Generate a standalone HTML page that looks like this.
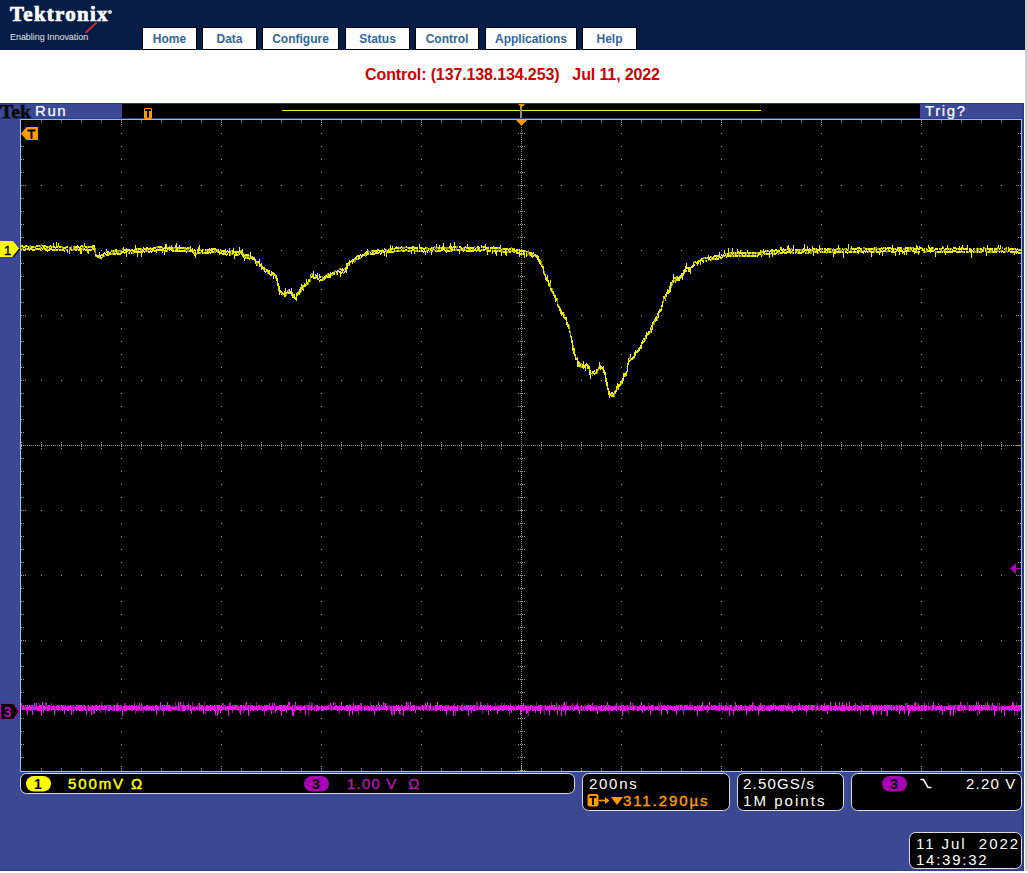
<!DOCTYPE html>
<html><head><meta charset="utf-8">
<style>
html,body{margin:0;padding:0;background:#fff;width:1028px;height:873px;overflow:hidden;position:relative;font-family:"Liberation Sans",sans-serif}
#hdr{position:absolute;left:0;top:0;width:1025px;height:50px;background:#041C46}
#logo{position:absolute;left:10px;top:1px;color:#fff;font-family:"Liberation Serif",serif;font-weight:bold;font-size:21px;letter-spacing:1.25px;line-height:26px;-webkit-text-stroke:0.7px #fff}
#reg{position:absolute;left:108px;top:10px;width:4px;height:4px;border-radius:50%;background:#d8d8d8}
#slash{position:absolute;left:85px;top:31.5px;width:14.5px;height:1.7px;background:#d42a2a;transform:rotate(-43deg);transform-origin:0 0}
#tag{position:absolute;left:10px;top:32px;color:#e6e6e6;font-size:9px;letter-spacing:-0.05px;line-height:11px}
.tab{position:absolute;top:27px;height:21px;border:1px solid #000;border-radius:1px;background:#fff;color:#336699;font-weight:bold;font-size:12px;line-height:22px;text-align:center}
#title{position:absolute;left:0;top:65px;width:1025px;text-align:center;color:#CC0000;font-weight:bold;font-size:16px;letter-spacing:-0.12px;line-height:20px}
#sb{position:absolute;left:1025px;top:0;width:3px;height:871px;background:#cfcfcf}
svg{position:absolute;left:0;top:0}
.st{font-family:"Liberation Sans",sans-serif}
</style></head><body>
<div id="hdr">
  <div id="logo">Tektronix</div>
  <div id="reg"></div>
  <div id="slash"></div>
  <div id="tag">Enabling Innovation</div>
  <div class="tab" style="left:142px;width:53px">Home</div>
  <div class="tab" style="left:202px;width:53px">Data</div>
  <div class="tab" style="left:262px;width:75px">Configure</div>
  <div class="tab" style="left:345px;width:63px">Status</div>
  <div class="tab" style="left:415px;width:62px">Control</div>
  <div class="tab" style="left:485px;width:90px">Applications</div>
  <div class="tab" style="left:582px;width:53px">Help</div>
</div>
<div id="title">Control: (137.138.134.253)&nbsp;&nbsp;&nbsp;Jul 11, 2022</div>
<div id="sb"></div>
<svg width="1028" height="873" viewBox="0 0 1028 873" style="left:0;top:0">
  <rect x="0" y="103" width="1024" height="768" fill="#3B4994"/>
  <rect x="0" y="103" width="1024" height="1" fill="#2B3A8C"/>
  <rect x="1022" y="103" width="2" height="768" fill="#2B3A8C"/>
  <rect x="0" y="870" width="1024" height="1" fill="#2B3A8C"/>
  <!-- top status bar -->
  <rect x="122" y="104" width="798" height="14" fill="#000"/>
  <rect x="0" y="118" width="1022" height="1" fill="#2B3A8C"/>
  <text x="0" y="117.5" font-family="Liberation Serif" font-weight="bold" font-size="19.5" fill="#0a0a0a" stroke="#0a0a0a" stroke-width="0.6" textLength="31" lengthAdjust="spacingAndGlyphs">Tek</text>
  <g class="st" font-size="15" fill="#fff" stroke="#fff" stroke-width="0.2">
  <text x="35" y="116" letter-spacing="1.6">Run</text>
  <text x="925" y="116" letter-spacing="1.6">Trig?</text>
  </g>
  <line x1="282" y1="110.5" x2="761" y2="110.5" stroke="#F8F800" stroke-width="1"/>
  <rect x="520" y="106" width="2" height="12" fill="#8c8c8c"/>
  <path d="M518 104h7l-3.5 3.5z" fill="#FF9A00"/>
  <rect x="144" y="108" width="8" height="11" rx="1.2" fill="#FF9A00"/>
  <path d="M145 109h6v2h-2v6.5h-2v-6.5h-2z" fill="#000"/>
  <!-- graticule -->
  <rect x="20.5" y="119.5" width="1001" height="652" fill="#000" stroke="#8FC0F8" stroke-width="1"/>
  <g stroke="#A39676" stroke-width="1" shape-rendering="crispEdges">
<line x1="41" y1="185.5" x2="1021" y2="185.5" stroke-dasharray="1 19"/>
<line x1="41" y1="250.5" x2="1021" y2="250.5" stroke-dasharray="1 19"/>
<line x1="41" y1="315.5" x2="1021" y2="315.5" stroke-dasharray="1 19"/>
<line x1="41" y1="380.5" x2="1021" y2="380.5" stroke-dasharray="1 19"/>
<line x1="41" y1="510.5" x2="1021" y2="510.5" stroke-dasharray="1 19"/>
<line x1="41" y1="575.5" x2="1021" y2="575.5" stroke-dasharray="1 19"/>
<line x1="41" y1="640.5" x2="1021" y2="640.5" stroke-dasharray="1 19"/>
<line x1="41" y1="705.5" x2="1021" y2="705.5" stroke-dasharray="1 19"/>
<line x1="121.5" y1="133" x2="121.5" y2="771" stroke-dasharray="1 12"/>
<line x1="221.5" y1="133" x2="221.5" y2="771" stroke-dasharray="1 12"/>
<line x1="321.5" y1="133" x2="321.5" y2="771" stroke-dasharray="1 12"/>
<line x1="421.5" y1="133" x2="421.5" y2="771" stroke-dasharray="1 12"/>
<line x1="621.5" y1="133" x2="621.5" y2="771" stroke-dasharray="1 12"/>
<line x1="721.5" y1="133" x2="721.5" y2="771" stroke-dasharray="1 12"/>
<line x1="821.5" y1="133" x2="821.5" y2="771" stroke-dasharray="1 12"/>
<line x1="921.5" y1="133" x2="921.5" y2="771" stroke-dasharray="1 12"/>
<line x1="21" y1="445.5" x2="1021" y2="445.5" stroke-dasharray="1 1"/>
<line x1="521.5" y1="127" x2="521.5" y2="771" stroke-dasharray="1 1"/>
<path d="M21 442h1v1h-1zM21 444h1v1h-1zM21 446h1v1h-1zM21 448h1v1h-1zM41 442h1v1h-1zM41 444h1v1h-1zM41 446h1v1h-1zM41 448h1v1h-1zM61 442h1v1h-1zM61 444h1v1h-1zM61 446h1v1h-1zM61 448h1v1h-1zM81 442h1v1h-1zM81 444h1v1h-1zM81 446h1v1h-1zM81 448h1v1h-1zM101 442h1v1h-1zM101 444h1v1h-1zM101 446h1v1h-1zM101 448h1v1h-1zM121 442h1v1h-1zM121 444h1v1h-1zM121 446h1v1h-1zM121 448h1v1h-1zM141 442h1v1h-1zM141 444h1v1h-1zM141 446h1v1h-1zM141 448h1v1h-1zM161 442h1v1h-1zM161 444h1v1h-1zM161 446h1v1h-1zM161 448h1v1h-1zM181 442h1v1h-1zM181 444h1v1h-1zM181 446h1v1h-1zM181 448h1v1h-1zM201 442h1v1h-1zM201 444h1v1h-1zM201 446h1v1h-1zM201 448h1v1h-1zM221 442h1v1h-1zM221 444h1v1h-1zM221 446h1v1h-1zM221 448h1v1h-1zM241 442h1v1h-1zM241 444h1v1h-1zM241 446h1v1h-1zM241 448h1v1h-1zM261 442h1v1h-1zM261 444h1v1h-1zM261 446h1v1h-1zM261 448h1v1h-1zM281 442h1v1h-1zM281 444h1v1h-1zM281 446h1v1h-1zM281 448h1v1h-1zM301 442h1v1h-1zM301 444h1v1h-1zM301 446h1v1h-1zM301 448h1v1h-1zM321 442h1v1h-1zM321 444h1v1h-1zM321 446h1v1h-1zM321 448h1v1h-1zM341 442h1v1h-1zM341 444h1v1h-1zM341 446h1v1h-1zM341 448h1v1h-1zM361 442h1v1h-1zM361 444h1v1h-1zM361 446h1v1h-1zM361 448h1v1h-1zM381 442h1v1h-1zM381 444h1v1h-1zM381 446h1v1h-1zM381 448h1v1h-1zM401 442h1v1h-1zM401 444h1v1h-1zM401 446h1v1h-1zM401 448h1v1h-1zM421 442h1v1h-1zM421 444h1v1h-1zM421 446h1v1h-1zM421 448h1v1h-1zM441 442h1v1h-1zM441 444h1v1h-1zM441 446h1v1h-1zM441 448h1v1h-1zM461 442h1v1h-1zM461 444h1v1h-1zM461 446h1v1h-1zM461 448h1v1h-1zM481 442h1v1h-1zM481 444h1v1h-1zM481 446h1v1h-1zM481 448h1v1h-1zM501 442h1v1h-1zM501 444h1v1h-1zM501 446h1v1h-1zM501 448h1v1h-1zM541 442h1v1h-1zM541 444h1v1h-1zM541 446h1v1h-1zM541 448h1v1h-1zM561 442h1v1h-1zM561 444h1v1h-1zM561 446h1v1h-1zM561 448h1v1h-1zM581 442h1v1h-1zM581 444h1v1h-1zM581 446h1v1h-1zM581 448h1v1h-1zM601 442h1v1h-1zM601 444h1v1h-1zM601 446h1v1h-1zM601 448h1v1h-1zM621 442h1v1h-1zM621 444h1v1h-1zM621 446h1v1h-1zM621 448h1v1h-1zM641 442h1v1h-1zM641 444h1v1h-1zM641 446h1v1h-1zM641 448h1v1h-1zM661 442h1v1h-1zM661 444h1v1h-1zM661 446h1v1h-1zM661 448h1v1h-1zM681 442h1v1h-1zM681 444h1v1h-1zM681 446h1v1h-1zM681 448h1v1h-1zM701 442h1v1h-1zM701 444h1v1h-1zM701 446h1v1h-1zM701 448h1v1h-1zM721 442h1v1h-1zM721 444h1v1h-1zM721 446h1v1h-1zM721 448h1v1h-1zM741 442h1v1h-1zM741 444h1v1h-1zM741 446h1v1h-1zM741 448h1v1h-1zM761 442h1v1h-1zM761 444h1v1h-1zM761 446h1v1h-1zM761 448h1v1h-1zM781 442h1v1h-1zM781 444h1v1h-1zM781 446h1v1h-1zM781 448h1v1h-1zM801 442h1v1h-1zM801 444h1v1h-1zM801 446h1v1h-1zM801 448h1v1h-1zM821 442h1v1h-1zM821 444h1v1h-1zM821 446h1v1h-1zM821 448h1v1h-1zM841 442h1v1h-1zM841 444h1v1h-1zM841 446h1v1h-1zM841 448h1v1h-1zM861 442h1v1h-1zM861 444h1v1h-1zM861 446h1v1h-1zM861 448h1v1h-1zM881 442h1v1h-1zM881 444h1v1h-1zM881 446h1v1h-1zM881 448h1v1h-1zM901 442h1v1h-1zM901 444h1v1h-1zM901 446h1v1h-1zM901 448h1v1h-1zM921 442h1v1h-1zM921 444h1v1h-1zM921 446h1v1h-1zM921 448h1v1h-1zM941 442h1v1h-1zM941 444h1v1h-1zM941 446h1v1h-1zM941 448h1v1h-1zM961 442h1v1h-1zM961 444h1v1h-1zM961 446h1v1h-1zM961 448h1v1h-1zM981 442h1v1h-1zM981 444h1v1h-1zM981 446h1v1h-1zM981 448h1v1h-1zM1001 442h1v1h-1zM1001 444h1v1h-1zM1001 446h1v1h-1zM1001 448h1v1h-1zM1021 442h1v1h-1zM1021 444h1v1h-1zM1021 446h1v1h-1zM1021 448h1v1h-1zM518 120h1v1h-1zM520 120h1v1h-1zM522 120h1v1h-1zM524 120h1v1h-1zM518 133h1v1h-1zM520 133h1v1h-1zM522 133h1v1h-1zM524 133h1v1h-1zM518 146h1v1h-1zM520 146h1v1h-1zM522 146h1v1h-1zM524 146h1v1h-1zM518 159h1v1h-1zM520 159h1v1h-1zM522 159h1v1h-1zM524 159h1v1h-1zM518 172h1v1h-1zM520 172h1v1h-1zM522 172h1v1h-1zM524 172h1v1h-1zM518 185h1v1h-1zM520 185h1v1h-1zM522 185h1v1h-1zM524 185h1v1h-1zM518 198h1v1h-1zM520 198h1v1h-1zM522 198h1v1h-1zM524 198h1v1h-1zM518 211h1v1h-1zM520 211h1v1h-1zM522 211h1v1h-1zM524 211h1v1h-1zM518 224h1v1h-1zM520 224h1v1h-1zM522 224h1v1h-1zM524 224h1v1h-1zM518 237h1v1h-1zM520 237h1v1h-1zM522 237h1v1h-1zM524 237h1v1h-1zM518 250h1v1h-1zM520 250h1v1h-1zM522 250h1v1h-1zM524 250h1v1h-1zM518 263h1v1h-1zM520 263h1v1h-1zM522 263h1v1h-1zM524 263h1v1h-1zM518 276h1v1h-1zM520 276h1v1h-1zM522 276h1v1h-1zM524 276h1v1h-1zM518 289h1v1h-1zM520 289h1v1h-1zM522 289h1v1h-1zM524 289h1v1h-1zM518 302h1v1h-1zM520 302h1v1h-1zM522 302h1v1h-1zM524 302h1v1h-1zM518 315h1v1h-1zM520 315h1v1h-1zM522 315h1v1h-1zM524 315h1v1h-1zM518 328h1v1h-1zM520 328h1v1h-1zM522 328h1v1h-1zM524 328h1v1h-1zM518 341h1v1h-1zM520 341h1v1h-1zM522 341h1v1h-1zM524 341h1v1h-1zM518 354h1v1h-1zM520 354h1v1h-1zM522 354h1v1h-1zM524 354h1v1h-1zM518 367h1v1h-1zM520 367h1v1h-1zM522 367h1v1h-1zM524 367h1v1h-1zM518 380h1v1h-1zM520 380h1v1h-1zM522 380h1v1h-1zM524 380h1v1h-1zM518 393h1v1h-1zM520 393h1v1h-1zM522 393h1v1h-1zM524 393h1v1h-1zM518 406h1v1h-1zM520 406h1v1h-1zM522 406h1v1h-1zM524 406h1v1h-1zM518 419h1v1h-1zM520 419h1v1h-1zM522 419h1v1h-1zM524 419h1v1h-1zM518 432h1v1h-1zM520 432h1v1h-1zM522 432h1v1h-1zM524 432h1v1h-1zM518 458h1v1h-1zM520 458h1v1h-1zM522 458h1v1h-1zM524 458h1v1h-1zM518 471h1v1h-1zM520 471h1v1h-1zM522 471h1v1h-1zM524 471h1v1h-1zM518 484h1v1h-1zM520 484h1v1h-1zM522 484h1v1h-1zM524 484h1v1h-1zM518 497h1v1h-1zM520 497h1v1h-1zM522 497h1v1h-1zM524 497h1v1h-1zM518 510h1v1h-1zM520 510h1v1h-1zM522 510h1v1h-1zM524 510h1v1h-1zM518 523h1v1h-1zM520 523h1v1h-1zM522 523h1v1h-1zM524 523h1v1h-1zM518 536h1v1h-1zM520 536h1v1h-1zM522 536h1v1h-1zM524 536h1v1h-1zM518 549h1v1h-1zM520 549h1v1h-1zM522 549h1v1h-1zM524 549h1v1h-1zM518 562h1v1h-1zM520 562h1v1h-1zM522 562h1v1h-1zM524 562h1v1h-1zM518 575h1v1h-1zM520 575h1v1h-1zM522 575h1v1h-1zM524 575h1v1h-1zM518 588h1v1h-1zM520 588h1v1h-1zM522 588h1v1h-1zM524 588h1v1h-1zM518 601h1v1h-1zM520 601h1v1h-1zM522 601h1v1h-1zM524 601h1v1h-1zM518 614h1v1h-1zM520 614h1v1h-1zM522 614h1v1h-1zM524 614h1v1h-1zM518 627h1v1h-1zM520 627h1v1h-1zM522 627h1v1h-1zM524 627h1v1h-1zM518 640h1v1h-1zM520 640h1v1h-1zM522 640h1v1h-1zM524 640h1v1h-1zM518 653h1v1h-1zM520 653h1v1h-1zM522 653h1v1h-1zM524 653h1v1h-1zM518 666h1v1h-1zM520 666h1v1h-1zM522 666h1v1h-1zM524 666h1v1h-1zM518 679h1v1h-1zM520 679h1v1h-1zM522 679h1v1h-1zM524 679h1v1h-1zM518 692h1v1h-1zM520 692h1v1h-1zM522 692h1v1h-1zM524 692h1v1h-1zM518 705h1v1h-1zM520 705h1v1h-1zM522 705h1v1h-1zM524 705h1v1h-1zM518 718h1v1h-1zM520 718h1v1h-1zM522 718h1v1h-1zM524 718h1v1h-1zM518 731h1v1h-1zM520 731h1v1h-1zM522 731h1v1h-1zM524 731h1v1h-1zM518 744h1v1h-1zM520 744h1v1h-1zM522 744h1v1h-1zM524 744h1v1h-1zM518 757h1v1h-1zM520 757h1v1h-1zM522 757h1v1h-1zM524 757h1v1h-1zM518 770h1v1h-1zM520 770h1v1h-1zM522 770h1v1h-1zM524 770h1v1h-1zM41 120h1v1h-1zM41 122h1v1h-1zM41 768h1v1h-1zM41 770h1v1h-1zM61 120h1v1h-1zM61 122h1v1h-1zM61 768h1v1h-1zM61 770h1v1h-1zM81 120h1v1h-1zM81 122h1v1h-1zM81 768h1v1h-1zM81 770h1v1h-1zM101 120h1v1h-1zM101 122h1v1h-1zM101 768h1v1h-1zM101 770h1v1h-1zM121 120h1v1h-1zM121 122h1v1h-1zM121 768h1v1h-1zM121 770h1v1h-1zM121 124h1v1h-1zM121 766h1v1h-1zM141 120h1v1h-1zM141 122h1v1h-1zM141 768h1v1h-1zM141 770h1v1h-1zM161 120h1v1h-1zM161 122h1v1h-1zM161 768h1v1h-1zM161 770h1v1h-1zM181 120h1v1h-1zM181 122h1v1h-1zM181 768h1v1h-1zM181 770h1v1h-1zM201 120h1v1h-1zM201 122h1v1h-1zM201 768h1v1h-1zM201 770h1v1h-1zM221 120h1v1h-1zM221 122h1v1h-1zM221 768h1v1h-1zM221 770h1v1h-1zM221 124h1v1h-1zM221 766h1v1h-1zM241 120h1v1h-1zM241 122h1v1h-1zM241 768h1v1h-1zM241 770h1v1h-1zM261 120h1v1h-1zM261 122h1v1h-1zM261 768h1v1h-1zM261 770h1v1h-1zM281 120h1v1h-1zM281 122h1v1h-1zM281 768h1v1h-1zM281 770h1v1h-1zM301 120h1v1h-1zM301 122h1v1h-1zM301 768h1v1h-1zM301 770h1v1h-1zM321 120h1v1h-1zM321 122h1v1h-1zM321 768h1v1h-1zM321 770h1v1h-1zM321 124h1v1h-1zM321 766h1v1h-1zM341 120h1v1h-1zM341 122h1v1h-1zM341 768h1v1h-1zM341 770h1v1h-1zM361 120h1v1h-1zM361 122h1v1h-1zM361 768h1v1h-1zM361 770h1v1h-1zM381 120h1v1h-1zM381 122h1v1h-1zM381 768h1v1h-1zM381 770h1v1h-1zM401 120h1v1h-1zM401 122h1v1h-1zM401 768h1v1h-1zM401 770h1v1h-1zM421 120h1v1h-1zM421 122h1v1h-1zM421 768h1v1h-1zM421 770h1v1h-1zM421 124h1v1h-1zM421 766h1v1h-1zM441 120h1v1h-1zM441 122h1v1h-1zM441 768h1v1h-1zM441 770h1v1h-1zM461 120h1v1h-1zM461 122h1v1h-1zM461 768h1v1h-1zM461 770h1v1h-1zM481 120h1v1h-1zM481 122h1v1h-1zM481 768h1v1h-1zM481 770h1v1h-1zM501 120h1v1h-1zM501 122h1v1h-1zM501 768h1v1h-1zM501 770h1v1h-1zM521 120h1v1h-1zM521 122h1v1h-1zM521 768h1v1h-1zM521 770h1v1h-1zM521 124h1v1h-1zM521 766h1v1h-1zM541 120h1v1h-1zM541 122h1v1h-1zM541 768h1v1h-1zM541 770h1v1h-1zM561 120h1v1h-1zM561 122h1v1h-1zM561 768h1v1h-1zM561 770h1v1h-1zM581 120h1v1h-1zM581 122h1v1h-1zM581 768h1v1h-1zM581 770h1v1h-1zM601 120h1v1h-1zM601 122h1v1h-1zM601 768h1v1h-1zM601 770h1v1h-1zM621 120h1v1h-1zM621 122h1v1h-1zM621 768h1v1h-1zM621 770h1v1h-1zM621 124h1v1h-1zM621 766h1v1h-1zM641 120h1v1h-1zM641 122h1v1h-1zM641 768h1v1h-1zM641 770h1v1h-1zM661 120h1v1h-1zM661 122h1v1h-1zM661 768h1v1h-1zM661 770h1v1h-1zM681 120h1v1h-1zM681 122h1v1h-1zM681 768h1v1h-1zM681 770h1v1h-1zM701 120h1v1h-1zM701 122h1v1h-1zM701 768h1v1h-1zM701 770h1v1h-1zM721 120h1v1h-1zM721 122h1v1h-1zM721 768h1v1h-1zM721 770h1v1h-1zM721 124h1v1h-1zM721 766h1v1h-1zM741 120h1v1h-1zM741 122h1v1h-1zM741 768h1v1h-1zM741 770h1v1h-1zM761 120h1v1h-1zM761 122h1v1h-1zM761 768h1v1h-1zM761 770h1v1h-1zM781 120h1v1h-1zM781 122h1v1h-1zM781 768h1v1h-1zM781 770h1v1h-1zM801 120h1v1h-1zM801 122h1v1h-1zM801 768h1v1h-1zM801 770h1v1h-1zM821 120h1v1h-1zM821 122h1v1h-1zM821 768h1v1h-1zM821 770h1v1h-1zM821 124h1v1h-1zM821 766h1v1h-1zM841 120h1v1h-1zM841 122h1v1h-1zM841 768h1v1h-1zM841 770h1v1h-1zM861 120h1v1h-1zM861 122h1v1h-1zM861 768h1v1h-1zM861 770h1v1h-1zM881 120h1v1h-1zM881 122h1v1h-1zM881 768h1v1h-1zM881 770h1v1h-1zM901 120h1v1h-1zM901 122h1v1h-1zM901 768h1v1h-1zM901 770h1v1h-1zM921 120h1v1h-1zM921 122h1v1h-1zM921 768h1v1h-1zM921 770h1v1h-1zM921 124h1v1h-1zM921 766h1v1h-1zM941 120h1v1h-1zM941 122h1v1h-1zM941 768h1v1h-1zM941 770h1v1h-1zM961 120h1v1h-1zM961 122h1v1h-1zM961 768h1v1h-1zM961 770h1v1h-1zM981 120h1v1h-1zM981 122h1v1h-1zM981 768h1v1h-1zM981 770h1v1h-1zM1001 120h1v1h-1zM1001 122h1v1h-1zM1001 768h1v1h-1zM1001 770h1v1h-1zM21 133h1v1h-1zM23 133h1v1h-1zM1018 133h1v1h-1zM1020 133h1v1h-1zM21 146h1v1h-1zM23 146h1v1h-1zM1018 146h1v1h-1zM1020 146h1v1h-1zM21 159h1v1h-1zM23 159h1v1h-1zM1018 159h1v1h-1zM1020 159h1v1h-1zM21 172h1v1h-1zM23 172h1v1h-1zM1018 172h1v1h-1zM1020 172h1v1h-1zM21 185h1v1h-1zM23 185h1v1h-1zM1018 185h1v1h-1zM1020 185h1v1h-1zM25 185h1v1h-1zM1016 185h1v1h-1zM21 198h1v1h-1zM23 198h1v1h-1zM1018 198h1v1h-1zM1020 198h1v1h-1zM21 211h1v1h-1zM23 211h1v1h-1zM1018 211h1v1h-1zM1020 211h1v1h-1zM21 224h1v1h-1zM23 224h1v1h-1zM1018 224h1v1h-1zM1020 224h1v1h-1zM21 237h1v1h-1zM23 237h1v1h-1zM1018 237h1v1h-1zM1020 237h1v1h-1zM21 250h1v1h-1zM23 250h1v1h-1zM1018 250h1v1h-1zM1020 250h1v1h-1zM25 250h1v1h-1zM1016 250h1v1h-1zM21 263h1v1h-1zM23 263h1v1h-1zM1018 263h1v1h-1zM1020 263h1v1h-1zM21 276h1v1h-1zM23 276h1v1h-1zM1018 276h1v1h-1zM1020 276h1v1h-1zM21 289h1v1h-1zM23 289h1v1h-1zM1018 289h1v1h-1zM1020 289h1v1h-1zM21 302h1v1h-1zM23 302h1v1h-1zM1018 302h1v1h-1zM1020 302h1v1h-1zM21 315h1v1h-1zM23 315h1v1h-1zM1018 315h1v1h-1zM1020 315h1v1h-1zM25 315h1v1h-1zM1016 315h1v1h-1zM21 328h1v1h-1zM23 328h1v1h-1zM1018 328h1v1h-1zM1020 328h1v1h-1zM21 341h1v1h-1zM23 341h1v1h-1zM1018 341h1v1h-1zM1020 341h1v1h-1zM21 354h1v1h-1zM23 354h1v1h-1zM1018 354h1v1h-1zM1020 354h1v1h-1zM21 367h1v1h-1zM23 367h1v1h-1zM1018 367h1v1h-1zM1020 367h1v1h-1zM21 380h1v1h-1zM23 380h1v1h-1zM1018 380h1v1h-1zM1020 380h1v1h-1zM25 380h1v1h-1zM1016 380h1v1h-1zM21 393h1v1h-1zM23 393h1v1h-1zM1018 393h1v1h-1zM1020 393h1v1h-1zM21 406h1v1h-1zM23 406h1v1h-1zM1018 406h1v1h-1zM1020 406h1v1h-1zM21 419h1v1h-1zM23 419h1v1h-1zM1018 419h1v1h-1zM1020 419h1v1h-1zM21 432h1v1h-1zM23 432h1v1h-1zM1018 432h1v1h-1zM1020 432h1v1h-1zM21 445h1v1h-1zM23 445h1v1h-1zM1018 445h1v1h-1zM1020 445h1v1h-1zM25 445h1v1h-1zM1016 445h1v1h-1zM21 458h1v1h-1zM23 458h1v1h-1zM1018 458h1v1h-1zM1020 458h1v1h-1zM21 471h1v1h-1zM23 471h1v1h-1zM1018 471h1v1h-1zM1020 471h1v1h-1zM21 484h1v1h-1zM23 484h1v1h-1zM1018 484h1v1h-1zM1020 484h1v1h-1zM21 497h1v1h-1zM23 497h1v1h-1zM1018 497h1v1h-1zM1020 497h1v1h-1zM21 510h1v1h-1zM23 510h1v1h-1zM1018 510h1v1h-1zM1020 510h1v1h-1zM25 510h1v1h-1zM1016 510h1v1h-1zM21 523h1v1h-1zM23 523h1v1h-1zM1018 523h1v1h-1zM1020 523h1v1h-1zM21 536h1v1h-1zM23 536h1v1h-1zM1018 536h1v1h-1zM1020 536h1v1h-1zM21 549h1v1h-1zM23 549h1v1h-1zM1018 549h1v1h-1zM1020 549h1v1h-1zM21 562h1v1h-1zM23 562h1v1h-1zM1018 562h1v1h-1zM1020 562h1v1h-1zM21 575h1v1h-1zM23 575h1v1h-1zM1018 575h1v1h-1zM1020 575h1v1h-1zM25 575h1v1h-1zM1016 575h1v1h-1zM21 588h1v1h-1zM23 588h1v1h-1zM1018 588h1v1h-1zM1020 588h1v1h-1zM21 601h1v1h-1zM23 601h1v1h-1zM1018 601h1v1h-1zM1020 601h1v1h-1zM21 614h1v1h-1zM23 614h1v1h-1zM1018 614h1v1h-1zM1020 614h1v1h-1zM21 627h1v1h-1zM23 627h1v1h-1zM1018 627h1v1h-1zM1020 627h1v1h-1zM21 640h1v1h-1zM23 640h1v1h-1zM1018 640h1v1h-1zM1020 640h1v1h-1zM25 640h1v1h-1zM1016 640h1v1h-1zM21 653h1v1h-1zM23 653h1v1h-1zM1018 653h1v1h-1zM1020 653h1v1h-1zM21 666h1v1h-1zM23 666h1v1h-1zM1018 666h1v1h-1zM1020 666h1v1h-1zM21 679h1v1h-1zM23 679h1v1h-1zM1018 679h1v1h-1zM1020 679h1v1h-1zM21 692h1v1h-1zM23 692h1v1h-1zM1018 692h1v1h-1zM1020 692h1v1h-1zM21 705h1v1h-1zM23 705h1v1h-1zM1018 705h1v1h-1zM1020 705h1v1h-1zM25 705h1v1h-1zM1016 705h1v1h-1zM21 718h1v1h-1zM23 718h1v1h-1zM1018 718h1v1h-1zM1020 718h1v1h-1zM21 731h1v1h-1zM23 731h1v1h-1zM1018 731h1v1h-1zM1020 731h1v1h-1zM21 744h1v1h-1zM23 744h1v1h-1zM1018 744h1v1h-1zM1020 744h1v1h-1zM21 757h1v1h-1zM23 757h1v1h-1zM1018 757h1v1h-1zM1020 757h1v1h-1z" fill="#A39676" stroke="none"/>
  </g>
  <path d="M516 120h11l-5.5 6z" fill="#FF9A00"/>
  <path d="M21 133.5l5.5-6.5h11.5v13h-11.5z" fill="#FF9A00"/>
  <path d="M27.5 129.5h8v2h-3v7.5h-2v-7.5h-3z" fill="#000"/>
  <!-- traces -->
  <g fill="none" stroke-width="1" shape-rendering="crispEdges">
  <path d="M21.5 706V710M24.5 706V710M25.5 706V710M26.5 706V711M28.5 706V710M31.5 705V711M33.5 705V710M34.5 706V710M35.5 705V711M37.5 706V711M39.5 703V705M42.5 705V710M45.5 706V711M45.5 702V706M46.5 706V711M50.5 705V710M51.5 705V711M51.5 703V705M55.5 706V711M59.5 705V710M60.5 705V711M64.5 705V711M66.5 706V710M72.5 705V710M74.5 706V710M75.5 706V710M77.5 705V710M83.5 705V711M86.5 706V711M87.5 705V710M89.5 706V711M90.5 705V711M93.5 710V714M100.5 706V711M100.5 710V713M101.5 702V705M103.5 706V710M105.5 709V714M107.5 705V711M108.5 705V711M111.5 706V710M112.5 706V711M113.5 705V711M115.5 705V710M119.5 705V710M121.5 705V710M122.5 706V711M124.5 703V706M125.5 703V705M130.5 706V710M135.5 709V714M137.5 706V711M139.5 702V705M140.5 706V711M142.5 705V711M143.5 706V711M143.5 710V713M145.5 706V711M149.5 705V711M152.5 705V711M154.5 706V711M158.5 705V711M159.5 706V711M161.5 705V711M163.5 705V711M163.5 710V716M165.5 706V710M171.5 706V711M172.5 705V710M173.5 706V711M174.5 706V710M175.5 706V711M175.5 702V706M176.5 705V710M177.5 706V711M179.5 705V711M180.5 706V711M181.5 705V710M183.5 702V705M186.5 705V710M189.5 706V711M191.5 706V710M192.5 706V710M192.5 702V706M193.5 705V711M194.5 706V711M195.5 706V711M196.5 706V710M197.5 705V711M198.5 705V710M198.5 703V705M200.5 705V710M204.5 705V710M204.5 702V705M205.5 706V710M205.5 709V715M211.5 705V711M215.5 705V711M216.5 705V711M218.5 710V714M222.5 705V710M223.5 705V710M223.5 703V705M224.5 705V710M225.5 705V711M226.5 706V711M230.5 702V705M232.5 710V713M233.5 705V710M237.5 705V711M239.5 706V710M239.5 709V713M242.5 706V710M243.5 709V713M245.5 703V705M246.5 706V710M247.5 705V710M249.5 705V710M249.5 709V713M250.5 703V706M251.5 705V710M255.5 706V711M256.5 702V705M261.5 705V711M263.5 706V711M264.5 710V716M268.5 705V710M271.5 705V711M273.5 709V713M274.5 706V710M275.5 705V710M285.5 705V710M288.5 705V711M290.5 706V710M291.5 706V711M293.5 706V710M295.5 706V711M297.5 705V710M298.5 705V710M300.5 705V711M300.5 710V713M301.5 705V711M302.5 706V710M305.5 705V711M306.5 705V710M307.5 705V710M308.5 710V716M309.5 702V706M310.5 706V710M311.5 702V705M312.5 705V710M312.5 703V705M313.5 706V710M314.5 706V711M315.5 705V711M319.5 706V710M320.5 706V710M324.5 705V710M326.5 705V711M329.5 706V710M330.5 705V710M332.5 706V710M333.5 705V710M335.5 702V706M339.5 705V710M339.5 709V714M344.5 706V711M345.5 706V710M348.5 706V710M351.5 706V710M352.5 706V710M356.5 705V711M358.5 709V715M360.5 706V711M360.5 703V706M362.5 706V710M363.5 706V710M365.5 705V711M367.5 705V711M369.5 706V711M370.5 706V710M370.5 702V706M372.5 706V710M374.5 706V711M375.5 706V711M377.5 706V710M378.5 705V711M380.5 706V710M381.5 706V710M382.5 706V710M384.5 703V706M387.5 705V710M388.5 705V710M389.5 705V710M391.5 705V710M392.5 706V710M392.5 709V716M393.5 710V714M400.5 710V715M401.5 706V710M402.5 705V710M403.5 706V711M405.5 705V711M407.5 706V711M407.5 702V706M408.5 702V705M409.5 705V711M410.5 705V711M415.5 706V711M417.5 706V710M419.5 706V710M420.5 706V711M421.5 705V711M424.5 705V710M427.5 705V711M428.5 705V710M431.5 706V711M432.5 706V711M433.5 706V710M434.5 706V711M438.5 706V710M441.5 706V710M446.5 705V710M447.5 705V711M449.5 706V711M452.5 706V711M454.5 703V706M455.5 710V716M456.5 706V711M458.5 705V710M459.5 706V710M460.5 706V710M462.5 705V711M462.5 703V705M463.5 705V711M469.5 706V711M471.5 705V710M475.5 705V711M476.5 705V710M476.5 702V705M477.5 702V706M478.5 705V710M479.5 706V710M482.5 705V710M482.5 709V714M486.5 705V711M487.5 703V705M492.5 706V710M493.5 706V711M495.5 706V710M495.5 703V706M497.5 705V711M499.5 705V711M501.5 703V706M504.5 703V706M507.5 706V711M509.5 709V715M510.5 703V705M513.5 705V711M514.5 706V711M515.5 705V711M522.5 706V711M524.5 705V711M527.5 705V710M528.5 709V716M531.5 705V710M533.5 705V711M534.5 705V711M536.5 705V710M536.5 702V705M541.5 705V710M542.5 705V711M543.5 706V711M544.5 705V710M544.5 709V715M546.5 706V711M551.5 702V705M553.5 705V711M555.5 705V710M556.5 705V710M557.5 706V710M558.5 705V710M560.5 706V710M561.5 705V710M562.5 705V710M563.5 702V706M566.5 705V711M566.5 702V705M569.5 705V711M571.5 705V711M572.5 705V710M572.5 703V705M573.5 705V711M575.5 705V710M579.5 706V711M580.5 706V710M582.5 706V711M583.5 706V711M584.5 705V711M585.5 705V710M588.5 703V705M592.5 706V711M594.5 705V710M595.5 705V711M597.5 706V711M599.5 706V710M602.5 706V711M604.5 705V711M607.5 705V711M609.5 709V714M610.5 706V711M613.5 706V710M614.5 705V711M617.5 705V710M619.5 705V710M621.5 702V705M622.5 705V711M626.5 705V710M628.5 706V710M628.5 709V714M629.5 705V710M631.5 706V710M632.5 705V710M632.5 703V705M635.5 705V710M636.5 706V710M638.5 706V711M639.5 705V711M641.5 705V711M645.5 706V711M646.5 706V710M647.5 706V710M648.5 705V711M648.5 703V705M653.5 705V711M654.5 706V710M655.5 706V711M656.5 706V710M658.5 705V711M658.5 703V705M659.5 705V711M660.5 705V711M660.5 702V705M668.5 705V710M672.5 706V711M673.5 706V710M677.5 705V711M679.5 706V711M682.5 706V711M683.5 706V710M683.5 709V715M688.5 706V710M690.5 706V711M690.5 702V706M691.5 705V710M692.5 705V710M693.5 706V710M696.5 706V711M698.5 706V710M703.5 706V711M705.5 705V710M708.5 706V711M709.5 705V710M710.5 706V710M713.5 705V710M720.5 705V711M721.5 703V705M722.5 705V710M722.5 709V713M724.5 706V711M726.5 706V711M726.5 702V706M728.5 705V710M729.5 705V711M732.5 706V711M733.5 706V710M735.5 706V711M737.5 706V711M739.5 706V711M741.5 706V711M742.5 706V711M744.5 706V711M747.5 706V711M750.5 705V711M753.5 706V710M753.5 703V706M756.5 706V711M757.5 706V710M758.5 705V711M761.5 705V711M763.5 705V711M765.5 706V710M766.5 705V710M773.5 703V705M774.5 705V710M780.5 705V711M784.5 705V710M788.5 706V710M789.5 705V711M790.5 705V711M792.5 706V710M796.5 705V710M800.5 705V710M801.5 705V711M803.5 706V710M809.5 706V710M810.5 705V710M814.5 706V710M815.5 705V711M816.5 705V711M817.5 703V706M818.5 706V711M819.5 705V711M822.5 705V711M829.5 705V711M832.5 706V710M837.5 706V711M838.5 706V711M840.5 706V711M845.5 706V711M847.5 706V711M852.5 706V711M855.5 706V711M856.5 705V710M860.5 710V715M861.5 705V710M861.5 702V705M862.5 705V710M864.5 705V711M869.5 705V710M870.5 705V710M870.5 703V705M873.5 705V710M875.5 705V710M876.5 709V715M878.5 705V711M883.5 705V711M886.5 710V716M890.5 705V710M892.5 705V710M893.5 705V711M895.5 705V711M898.5 705V710M902.5 705V711M904.5 706V710M905.5 705V710M905.5 703V705M906.5 706V711M906.5 703V706M907.5 703V705M914.5 705V711M916.5 706V710M917.5 706V710M917.5 703V706M918.5 703V705M920.5 706V711M923.5 705V711M927.5 706V711M928.5 702V706M929.5 706V711M930.5 706V710M931.5 705V711M934.5 705V710M935.5 705V711M938.5 706V710M938.5 703V706M939.5 709V713M943.5 706V711M945.5 706V711M946.5 706V710M948.5 703V706M949.5 705V711M949.5 710V714M951.5 705V710M952.5 705V710M955.5 705V711M955.5 710V713M956.5 705V710M957.5 705V711M960.5 706V711M963.5 705V710M963.5 709V713M965.5 705V710M966.5 706V710M967.5 705V710M967.5 702V705M968.5 705V711M970.5 706V710M972.5 705V711M974.5 706V710M977.5 709V716M978.5 702V706M980.5 706V711M982.5 705V711M985.5 705V711M985.5 703V705M989.5 705V711M990.5 706V710M991.5 705V711M992.5 706V711M997.5 706V711M997.5 703V706M998.5 706V710M999.5 705V711M1000.5 706V710M1001.5 705V711M1004.5 705V710M1005.5 705V711M1006.5 706V710M1010.5 706V710M1014.5 710V716M1016.5 702V705M1017.5 710V716" stroke="#8A108A"/>
  <path d="M21.5 703V706M22.5 706V710M23.5 705V710M24.5 707V710M26.5 707V710M27.5 705V710M27.5 709V715M28.5 707V710M29.5 705V710M30.5 705V711M31.5 707V710M32.5 705V710M32.5 709V715M33.5 707V710M34.5 707V710M34.5 703V706M35.5 707V710M36.5 706V710M36.5 703V706M37.5 707V710M38.5 706V711M39.5 705V711M40.5 705V711M41.5 705V711M41.5 710V716M42.5 702V705M43.5 705V711M43.5 710V713M44.5 706V710M45.5 707V710M46.5 703V706M47.5 706V711M48.5 705V711M49.5 705V710M51.5 707V710M52.5 706V710M53.5 705V710M54.5 706V710M54.5 709V715M56.5 706V710M57.5 705V710M58.5 705V711M59.5 707V710M61.5 706V710M62.5 706V711M63.5 705V710M64.5 707V710M64.5 710V714M65.5 705V710M66.5 707V710M67.5 706V711M68.5 705V711M69.5 706V710M70.5 705V710M71.5 706V710M71.5 709V715M73.5 705V710M73.5 709V713M75.5 707V710M76.5 705V711M77.5 707V710M78.5 705V710M79.5 705V711M80.5 705V711M81.5 706V711M82.5 706V711M83.5 707V710M84.5 705V710M85.5 706V711M86.5 710V715M88.5 705V711M89.5 707V710M90.5 707V710M91.5 706V710M91.5 709V715M92.5 705V710M93.5 706V711M94.5 706V711M94.5 710V714M95.5 705V710M96.5 705V711M97.5 706V710M98.5 706V710M99.5 705V711M101.5 705V710M102.5 705V710M103.5 707V710M104.5 705V710M105.5 706V710M106.5 705V710M108.5 707V710M109.5 705V711M110.5 705V710M111.5 707V710M113.5 707V710M114.5 705V711M116.5 705V711M117.5 706V711M117.5 703V706M118.5 705V711M119.5 707V710M120.5 705V711M121.5 707V710M122.5 710V716M123.5 706V710M124.5 706V711M125.5 705V711M126.5 705V711M127.5 706V710M128.5 706V710M129.5 705V710M130.5 707V710M131.5 705V711M132.5 705V711M133.5 706V710M134.5 706V710M134.5 703V706M135.5 706V710M136.5 705V711M137.5 707V710M138.5 705V711M139.5 705V710M141.5 705V711M141.5 703V705M143.5 707V710M144.5 706V710M145.5 707V710M146.5 705V711M147.5 705V710M148.5 706V711M149.5 707V710M150.5 706V710M151.5 706V711M152.5 707V710M153.5 706V711M155.5 705V710M156.5 705V711M156.5 710V715M157.5 706V710M158.5 707V710M160.5 706V710M160.5 702V706M162.5 705V711M163.5 707V710M164.5 705V711M165.5 707V710M166.5 705V711M167.5 706V710M167.5 702V706M168.5 705V711M169.5 705V711M170.5 706V711M172.5 707V710M173.5 707V710M174.5 707V710M175.5 707V710M176.5 707V710M178.5 706V711M178.5 702V706M179.5 707V710M180.5 702V706M182.5 705V711M183.5 705V711M184.5 705V711M185.5 706V710M187.5 705V710M188.5 706V710M188.5 703V706M190.5 705V711M191.5 709V714M192.5 707V710M193.5 707V710M194.5 707V710M196.5 707V710M197.5 707V710M199.5 706V711M199.5 703V706M200.5 707V710M201.5 705V711M202.5 705V710M203.5 706V710M203.5 709V714M205.5 707V710M206.5 705V711M207.5 705V711M208.5 706V711M209.5 706V710M210.5 705V711M211.5 707V710M212.5 705V710M213.5 706V710M214.5 705V711M215.5 707V710M215.5 710V715M217.5 705V710M217.5 709V716M218.5 705V711M219.5 705V710M220.5 706V710M220.5 709V713M221.5 706V711M222.5 707V710M222.5 703V705M223.5 707V710M225.5 707V710M226.5 707V710M227.5 706V710M228.5 706V710M228.5 709V716M229.5 705V710M229.5 703V705M230.5 705V710M231.5 706V710M232.5 705V711M233.5 707V710M234.5 705V710M235.5 705V710M236.5 705V710M237.5 707V710M238.5 706V711M239.5 707V710M240.5 705V711M240.5 710V715M241.5 706V711M243.5 705V710M244.5 706V711M245.5 705V710M246.5 707V710M246.5 702V706M247.5 707V710M248.5 705V711M248.5 710V716M250.5 706V711M251.5 707V710M252.5 705V710M253.5 706V711M254.5 706V710M255.5 707V710M256.5 705V710M257.5 706V711M258.5 705V710M259.5 705V710M260.5 706V710M262.5 706V711M263.5 707V710M264.5 705V711M265.5 706V711M266.5 705V711M267.5 705V710M268.5 707V710M269.5 706V710M269.5 703V706M270.5 706V710M271.5 707V710M271.5 710V714M272.5 705V710M272.5 703V705M273.5 706V710M274.5 703V706M275.5 707V710M275.5 709V713M276.5 706V711M277.5 706V710M278.5 706V710M279.5 705V710M280.5 705V711M281.5 705V711M281.5 710V716M282.5 706V711M283.5 705V711M284.5 705V711M285.5 707V710M286.5 706V711M286.5 710V713M287.5 705V710M288.5 707V710M288.5 702V705M289.5 706V710M289.5 702V706M290.5 707V710M291.5 707V710M292.5 705V711M292.5 710V716M293.5 709V716M294.5 705V711M295.5 702V706M296.5 706V710M297.5 707V710M298.5 707V710M299.5 706V711M300.5 707V710M301.5 707V710M302.5 707V710M303.5 706V710M304.5 705V710M305.5 707V710M305.5 710V715M308.5 705V711M309.5 706V710M311.5 705V711M312.5 707V710M314.5 707V710M316.5 705V711M317.5 705V710M318.5 706V711M319.5 707V710M321.5 705V711M322.5 706V711M323.5 706V711M324.5 707V710M325.5 706V710M326.5 707V710M327.5 706V710M328.5 705V710M330.5 703V705M331.5 705V711M333.5 707V710M333.5 702V705M334.5 706V710M335.5 706V710M336.5 705V710M337.5 706V711M338.5 706V711M339.5 707V710M340.5 706V710M341.5 706V711M341.5 702V706M342.5 706V710M343.5 706V710M344.5 707V710M345.5 707V710M346.5 705V711M347.5 705V711M348.5 707V710M349.5 705V711M349.5 710V716M350.5 705V711M351.5 707V710M352.5 707V710M352.5 709V715M353.5 706V710M353.5 703V706M354.5 706V711M355.5 705V711M356.5 707V710M357.5 705V711M358.5 705V710M359.5 705V710M360.5 707V710M361.5 706V711M361.5 703V706M364.5 706V711M365.5 707V710M366.5 706V710M367.5 707V710M368.5 706V711M369.5 707V710M370.5 707V710M371.5 705V711M372.5 707V710M373.5 705V711M374.5 710V715M375.5 707V710M376.5 705V711M377.5 707V710M378.5 707V710M378.5 702V705M379.5 705V711M380.5 707V710M381.5 707V710M382.5 707V710M383.5 706V710M383.5 702V706M384.5 706V710M385.5 705V710M385.5 703V705M386.5 706V711M387.5 707V710M390.5 706V711M391.5 707V710M391.5 709V715M393.5 706V711M394.5 706V711M394.5 710V715M395.5 706V711M396.5 705V711M397.5 706V710M398.5 705V711M399.5 706V710M399.5 709V714M400.5 706V711M402.5 707V710M403.5 707V710M403.5 710V716M404.5 706V711M405.5 707V710M406.5 706V710M406.5 702V706M407.5 707V710M408.5 705V710M410.5 707V710M410.5 702V705M411.5 706V711M412.5 705V710M413.5 705V711M414.5 705V710M415.5 710V713M416.5 706V710M418.5 706V710M419.5 707V710M420.5 707V710M422.5 705V710M423.5 706V711M425.5 706V710M425.5 703V706M426.5 705V710M427.5 702V705M429.5 705V711M430.5 705V710M430.5 703V705M433.5 707V710M435.5 705V711M436.5 705V711M437.5 706V710M437.5 702V706M438.5 707V710M439.5 705V710M440.5 705V711M442.5 706V711M443.5 706V710M444.5 706V711M445.5 705V711M446.5 707V710M446.5 709V715M447.5 707V710M448.5 705V710M449.5 707V710M450.5 706V711M451.5 706V710M452.5 707V710M453.5 705V710M453.5 709V716M454.5 706V711M455.5 706V711M456.5 707V710M457.5 705V711M460.5 707V710M461.5 706V711M462.5 707V710M464.5 706V710M465.5 706V710M466.5 705V711M467.5 705V710M468.5 705V710M468.5 709V716M469.5 707V710M470.5 705V710M471.5 707V710M471.5 709V713M472.5 706V710M473.5 705V711M474.5 705V711M476.5 707V710M477.5 706V710M479.5 707V710M480.5 706V710M480.5 702V706M481.5 706V710M482.5 707V710M483.5 705V710M484.5 706V710M485.5 705V710M486.5 707V710M487.5 705V710M488.5 705V710M488.5 709V715M489.5 706V710M490.5 705V711M491.5 706V710M492.5 707V710M493.5 707V710M494.5 706V711M495.5 707V710M496.5 706V710M497.5 707V710M497.5 710V714M498.5 706V711M499.5 707V710M500.5 705V710M501.5 706V710M502.5 706V711M503.5 705V711M504.5 706V710M505.5 705V710M506.5 705V710M507.5 707V710M508.5 705V711M509.5 706V710M510.5 705V711M511.5 706V711M511.5 710V713M512.5 706V710M513.5 707V710M514.5 707V710M516.5 706V710M517.5 706V710M518.5 706V710M519.5 706V710M520.5 705V711M520.5 710V715M521.5 705V711M522.5 707V710M523.5 705V711M523.5 703V705M524.5 707V710M525.5 705V710M526.5 706V710M526.5 709V714M527.5 707V710M527.5 709V713M528.5 706V710M529.5 706V711M530.5 705V710M532.5 706V711M533.5 707V710M534.5 707V710M535.5 706V710M535.5 709V713M536.5 707V710M537.5 706V711M538.5 705V711M539.5 705V711M540.5 705V710M540.5 709V714M541.5 707V710M545.5 705V710M546.5 707V710M547.5 706V710M548.5 706V711M549.5 705V710M549.5 709V715M550.5 706V710M551.5 705V710M552.5 705V710M553.5 707V710M554.5 705V711M555.5 707V710M556.5 707V710M556.5 703V705M557.5 709V715M558.5 707V710M559.5 705V711M561.5 707V710M561.5 709V716M562.5 707V710M563.5 706V711M564.5 705V710M564.5 702V705M565.5 705V710M565.5 709V715M566.5 707V710M567.5 706V710M568.5 706V710M570.5 706V710M572.5 707V710M574.5 706V711M575.5 707V710M576.5 705V710M577.5 706V710M577.5 703V706M578.5 706V711M579.5 710V714M581.5 706V711M583.5 707V710M585.5 707V710M586.5 706V710M587.5 705V711M588.5 705V710M589.5 705V710M590.5 705V711M591.5 706V711M592.5 707V710M592.5 703V706M593.5 706V711M594.5 707V710M595.5 707V710M596.5 705V711M597.5 710V714M598.5 706V710M599.5 707V710M600.5 706V711M601.5 706V711M603.5 705V711M604.5 707V710M605.5 706V711M606.5 705V710M607.5 707V710M607.5 702V705M608.5 705V711M609.5 705V710M610.5 707V710M611.5 706V711M612.5 706V711M613.5 707V710M614.5 707V710M615.5 706V710M616.5 705V711M616.5 703V705M618.5 706V710M620.5 706V711M621.5 705V710M622.5 710V716M623.5 705V711M624.5 706V711M625.5 706V711M627.5 705V711M628.5 707V710M630.5 705V710M630.5 702V705M631.5 707V710M632.5 707V710M633.5 705V711M634.5 706V710M637.5 706V711M638.5 707V710M639.5 707V710M640.5 705V710M641.5 707V710M641.5 702V705M642.5 706V710M642.5 709V713M643.5 705V710M644.5 705V711M645.5 707V710M646.5 707V710M647.5 707V710M649.5 706V710M650.5 706V710M650.5 709V715M651.5 705V710M652.5 705V711M653.5 707V710M655.5 707V710M656.5 707V710M657.5 706V710M658.5 707V710M661.5 706V711M661.5 710V715M662.5 706V710M663.5 705V710M664.5 705V710M665.5 706V710M666.5 706V711M667.5 705V711M667.5 710V714M668.5 707V710M669.5 706V710M670.5 705V710M671.5 706V710M672.5 707V710M673.5 707V710M674.5 706V711M675.5 706V711M676.5 705V711M676.5 710V715M677.5 707V710M678.5 705V710M680.5 705V710M681.5 706V710M682.5 707V710M684.5 705V711M685.5 705V710M686.5 705V710M687.5 705V710M688.5 707V710M689.5 705V710M690.5 707V710M691.5 707V710M692.5 707V710M694.5 706V711M695.5 706V710M696.5 707V710M697.5 705V710M697.5 709V716M698.5 707V710M699.5 705V711M700.5 706V711M701.5 706V711M702.5 705V710M702.5 702V705M704.5 706V710M705.5 707V710M706.5 706V710M707.5 705V710M707.5 709V713M708.5 707V710M709.5 707V710M709.5 702V705M711.5 705V710M712.5 706V710M713.5 707V710M714.5 705V710M715.5 705V710M716.5 706V711M717.5 706V710M718.5 705V711M719.5 705V711M719.5 703V705M721.5 705V710M722.5 707V710M723.5 706V710M725.5 705V711M726.5 707V710M727.5 706V711M728.5 707V710M729.5 707V710M729.5 710V716M730.5 705V710M731.5 705V711M733.5 709V715M734.5 706V711M735.5 707V710M735.5 702V706M736.5 705V710M738.5 705V710M739.5 707V710M740.5 705V710M741.5 707V710M743.5 706V710M745.5 705V710M746.5 706V710M746.5 709V715M747.5 707V710M748.5 706V711M749.5 705V711M750.5 707V710M751.5 705V710M752.5 705V711M752.5 702V705M754.5 705V710M755.5 706V711M757.5 707V710M758.5 707V710M758.5 710V715M759.5 705V711M760.5 706V710M760.5 703V706M761.5 707V710M762.5 705V711M764.5 705V711M766.5 707V710M767.5 706V711M768.5 705V711M769.5 706V711M770.5 705V711M771.5 705V710M772.5 706V710M773.5 705V710M775.5 705V711M776.5 706V710M777.5 706V710M778.5 706V711M779.5 705V710M780.5 707V710M781.5 706V711M782.5 705V711M783.5 705V711M785.5 705V710M786.5 706V711M787.5 705V711M788.5 707V710M788.5 703V706M789.5 707V710M790.5 707V710M791.5 705V711M792.5 709V713M793.5 706V710M794.5 706V711M795.5 705V711M797.5 706V710M798.5 705V711M799.5 705V710M799.5 703V705M800.5 707V710M802.5 705V710M803.5 707V710M804.5 706V711M805.5 705V711M806.5 705V710M806.5 709V713M807.5 706V711M808.5 705V710M810.5 707V710M811.5 705V710M812.5 705V711M813.5 705V710M816.5 707V710M817.5 706V710M820.5 706V710M821.5 706V710M822.5 707V710M823.5 706V711M824.5 706V711M824.5 703V706M825.5 706V711M826.5 705V711M827.5 705V711M827.5 710V714M828.5 705V710M830.5 705V711M830.5 702V705M831.5 706V711M833.5 706V710M834.5 706V711M835.5 705V711M835.5 702V705M836.5 705V710M837.5 707V710M838.5 707V710M839.5 705V710M839.5 702V705M840.5 707V710M841.5 705V711M842.5 705V711M842.5 702V705M843.5 705V711M844.5 705V711M845.5 707V710M846.5 705V710M846.5 703V705M847.5 707V710M848.5 706V711M849.5 706V711M849.5 702V706M850.5 706V710M851.5 706V711M853.5 705V710M854.5 705V711M855.5 707V710M855.5 703V706M857.5 705V711M858.5 706V710M859.5 706V710M860.5 706V711M861.5 707V710M862.5 707V710M863.5 705V711M865.5 705V710M866.5 705V710M867.5 705V711M868.5 705V710M871.5 706V711M872.5 705V710M872.5 709V714M873.5 707V710M873.5 709V716M874.5 705V711M875.5 707V710M876.5 705V710M877.5 706V711M879.5 705V711M880.5 706V710M881.5 706V710M881.5 709V715M882.5 706V711M884.5 705V711M885.5 705V711M886.5 706V711M887.5 705V710M887.5 709V716M888.5 705V710M889.5 705V710M890.5 707V710M891.5 705V711M893.5 707V710M894.5 706V710M896.5 705V711M897.5 706V710M899.5 705V711M899.5 710V714M900.5 706V711M901.5 705V710M902.5 707V710M903.5 706V710M904.5 707V710M904.5 709V714M907.5 705V710M908.5 705V711M908.5 710V716M909.5 705V711M909.5 710V713M910.5 706V711M911.5 705V710M912.5 705V711M913.5 706V711M914.5 707V710M914.5 703V705M915.5 705V711M915.5 702V705M916.5 707V710M917.5 707V710M918.5 705V711M919.5 706V711M921.5 705V711M922.5 705V711M924.5 705V711M924.5 703V705M925.5 706V711M926.5 705V710M928.5 706V710M929.5 707V710M932.5 705V711M933.5 705V710M933.5 702V705M935.5 707V710M936.5 706V711M937.5 706V710M938.5 707V710M939.5 705V710M940.5 706V711M941.5 705V711M942.5 706V710M942.5 709V715M944.5 706V711M946.5 707V710M947.5 706V710M948.5 706V710M949.5 707V710M950.5 705V710M950.5 709V716M951.5 707V710M953.5 706V711M953.5 710V716M954.5 705V710M957.5 707V710M958.5 705V711M959.5 705V711M960.5 702V706M961.5 706V711M962.5 706V710M964.5 705V710M965.5 707V710M969.5 705V711M970.5 707V710M971.5 705V711M973.5 705V711M974.5 707V710M975.5 705V711M976.5 705V710M976.5 702V705M977.5 705V710M978.5 706V710M979.5 705V711M979.5 710V714M981.5 706V711M982.5 707V710M983.5 705V710M984.5 705V710M985.5 707V710M986.5 705V710M987.5 705V711M987.5 702V705M988.5 705V710M989.5 707V710M991.5 707V710M992.5 703V706M993.5 705V710M994.5 705V711M994.5 710V716M995.5 706V711M996.5 706V711M999.5 707V710M999.5 703V705M1001.5 707V710M1001.5 710V713M1002.5 706V710M1003.5 706V710M1004.5 707V710M1004.5 709V716M1005.5 707V710M1006.5 707V710M1007.5 706V710M1008.5 706V710M1009.5 706V711M1010.5 707V710M1011.5 705V711M1012.5 706V710M1012.5 702V706M1013.5 706V710M1013.5 703V706M1014.5 705V711M1015.5 706V711M1016.5 705V711M1017.5 706V711M1018.5 705V711M1019.5 705V711M1020.5 706V710" stroke="#F010F0"/>
  <path d="M21.5 248V250M22.5 248V250M22.5 245V250M23.5 246V251M25.5 245V250M26.5 248V250M27.5 245V247M28.5 246V249M29.5 246V248M29.5 246V251M30.5 245V247M30.5 245V250M32.5 246V251M34.5 246V248M35.5 246V250M38.5 245V247M40.5 248V250M40.5 245V250M41.5 244V246M43.5 245V249M46.5 246V251M47.5 246V251M48.5 246V248M49.5 246V248M52.5 246V248M55.5 247V251M58.5 248V250M61.5 246V248M61.5 249V251M62.5 246V248M62.5 246V251M65.5 248V250M66.5 249V251M69.5 247V252M71.5 246V251M72.5 249V251M73.5 246V248M73.5 249V251M73.5 246V251M75.5 246V251M76.5 246V251M77.5 247V250M82.5 248V250M82.5 245V250M83.5 246V248M83.5 246V251M86.5 246V251M87.5 246V248M87.5 246V251M90.5 246V248M92.5 248V250M93.5 245V250M95.5 248V257M96.5 254V257M99.5 255V259M102.5 254V258M104.5 255V257M107.5 251V253M108.5 251V256M111.5 253V255M112.5 253V255M112.5 250V255M113.5 250V255M114.5 250V252M114.5 250V255M116.5 252V254M117.5 250V252M117.5 250V255M118.5 250V252M118.5 250V255M119.5 250V252M120.5 250V252M120.5 250V255M122.5 248V250M128.5 252V254M129.5 249V254M132.5 252V254M132.5 249V254M133.5 250V254M135.5 248V253M137.5 248V250M137.5 248V253M138.5 248V253M140.5 248V253M141.5 248V250M143.5 247V252M145.5 249V252M146.5 247V249M147.5 250V252M147.5 247V252M148.5 248V253M150.5 247V252M151.5 248V253M156.5 246V248M157.5 246V251M159.5 246V251M160.5 246V251M167.5 247V252M168.5 247V250M173.5 247V249M173.5 247V252M174.5 247V249M174.5 250V252M175.5 247V249M175.5 247V252M176.5 247V249M176.5 250V252M177.5 250V252M179.5 247V252M184.5 247V249M184.5 247V252M185.5 247V252M187.5 250V252M187.5 247V252M188.5 250V252M188.5 247V252M189.5 247V249M194.5 252V254M195.5 253V255M196.5 253V255M197.5 249V254M200.5 249V251M200.5 252V254M201.5 250V253M202.5 252V254M203.5 249V251M203.5 252V254M205.5 249V254M206.5 249V251M206.5 249V254M207.5 252V254M208.5 249V254M209.5 248V253M212.5 248V250M214.5 251V253M214.5 248V253M215.5 251V253M215.5 248V253M217.5 249V253M224.5 250V255M229.5 254V256M230.5 254V256M230.5 251V256M231.5 250V252M231.5 253V255M236.5 251V253M238.5 254V256M238.5 251V256M239.5 250V255M240.5 250V254M242.5 253V257M244.5 254V259M245.5 254V259M246.5 257V259M246.5 254V259M247.5 254V259M248.5 254V259M249.5 255V257M251.5 256V259M256.5 261V266M257.5 261V266M258.5 261V264M260.5 264V267M265.5 268V270M267.5 269V274M271.5 274V276M272.5 272V274M275.5 274V279M282.5 292V296M286.5 292V296M287.5 290V294M288.5 289V291M288.5 289V294M298.5 291V295M301.5 286V292M303.5 286V290M306.5 282V286M308.5 279V285M310.5 274V282M311.5 273V275M312.5 273V278M315.5 274V279M318.5 278V280M319.5 277V279M322.5 276V278M322.5 276V281M323.5 278V281M326.5 274V278M327.5 273V275M327.5 273V278M328.5 273V275M331.5 273V276M332.5 272V276M333.5 272V275M335.5 270V272M336.5 271V275M339.5 268V270M343.5 272V274M344.5 268V270M348.5 263V266M351.5 260V262M354.5 258V263M355.5 257V262M357.5 258V260M360.5 257V259M365.5 255V257M365.5 252V257M366.5 251V253M368.5 250V252M368.5 250V255M369.5 251V253M371.5 250V252M373.5 250V255M377.5 252V254M382.5 249V253M386.5 249V251M386.5 249V254M389.5 248V250M389.5 248V253M391.5 248V253M393.5 248V250M395.5 250V252M396.5 250V252M398.5 247V252M399.5 247V249M399.5 250V252M400.5 250V252M403.5 247V249M403.5 247V252M404.5 247V249M405.5 246V248M407.5 247V249M407.5 250V252M409.5 247V252M410.5 250V252M413.5 246V251M414.5 247V252M415.5 250V252M416.5 250V252M416.5 247V252M417.5 247V252M418.5 250V252M420.5 250V252M421.5 250V252M426.5 247V249M426.5 250V252M426.5 247V252M427.5 247V249M429.5 248V250M429.5 251V253M431.5 247V252M432.5 247V252M434.5 246V248M434.5 249V251M435.5 247V249M436.5 247V249M436.5 250V252M436.5 247V252M437.5 247V249M438.5 247V252M439.5 247V252M440.5 247V249M445.5 247V249M446.5 247V249M446.5 247V252M447.5 247V249M447.5 247V252M448.5 247V249M449.5 247V249M450.5 250V252M450.5 247V252M453.5 249V251M454.5 249V251M455.5 249V251M456.5 246V248M456.5 249V251M456.5 246V251M457.5 246V248M460.5 249V251M460.5 246V251M463.5 247V249M463.5 247V252M465.5 249V251M468.5 247V252M469.5 250V252M470.5 247V252M472.5 247V252M473.5 247V252M474.5 246V248M476.5 247V249M477.5 246V251M478.5 249V251M479.5 247V252M482.5 246V248M482.5 249V251M483.5 246V251M486.5 250V252M486.5 247V252M487.5 247V252M488.5 247V252M490.5 247V249M492.5 247V252M493.5 250V252M495.5 247V252M496.5 250V252M496.5 247V252M498.5 247V249M498.5 250V252M498.5 247V252M500.5 247V252M501.5 249V253M502.5 251V253M502.5 248V253M506.5 248V253M507.5 251V253M508.5 249V253M509.5 248V253M510.5 248V253M511.5 247V249M511.5 250V252M513.5 248V253M517.5 249V254M518.5 249V251M521.5 250V255M522.5 253V255M524.5 250V255M525.5 250V252M527.5 251V253M527.5 254V256M528.5 250V252M528.5 253V255M528.5 250V255M529.5 252V256M532.5 253V258M541.5 261V267M542.5 264V269M544.5 271V276M550.5 283V291M552.5 288V294M554.5 293V297M557.5 298V307M558.5 304V308M564.5 314V319M569.5 325V333M570.5 331V338M573.5 345V352M576.5 358V360M579.5 362V367M580.5 363V368M581.5 363V365M581.5 366V368M581.5 363V368M592.5 371V376M597.5 369V373M598.5 367V371M602.5 367V370M611.5 392V397M612.5 392V397M614.5 392V397M617.5 386V390M621.5 380V385M625.5 372V377M629.5 357V359M630.5 356V358M630.5 356V361M645.5 336V341M647.5 333V336M650.5 327V333M651.5 326V330M653.5 323V325M654.5 319V325M657.5 313V321M663.5 296V303M665.5 294V300M671.5 284V288M672.5 280V286M674.5 280V282M675.5 277V282M676.5 276V281M678.5 277V279M688.5 267V269M688.5 270V272M694.5 261V263M703.5 257V259M704.5 257V259M705.5 260V262M706.5 257V259M708.5 258V261M711.5 256V258M711.5 259V261M711.5 256V261M714.5 258V260M714.5 255V260M716.5 258V260M718.5 255V260M723.5 254V257M725.5 253V256M726.5 253V255M726.5 253V258M728.5 255V257M729.5 252V254M729.5 252V257M730.5 252V254M730.5 252V257M731.5 255V257M731.5 252V257M732.5 252V257M734.5 252V254M734.5 255V257M734.5 252V257M736.5 252V257M738.5 254V256M738.5 251V256M739.5 252V257M740.5 255V257M741.5 255V257M741.5 252V257M745.5 255V257M746.5 252V254M746.5 255V257M746.5 252V257M747.5 252V254M748.5 252V257M749.5 252V257M750.5 255V257M751.5 252V254M752.5 252V257M753.5 252V257M755.5 252V257M756.5 252V254M756.5 255V257M757.5 252V257M761.5 254V256M761.5 251V256M762.5 254V256M765.5 253V255M766.5 250V252M766.5 250V255M768.5 250V252M770.5 253V255M771.5 249V254M773.5 253V255M776.5 249V254M778.5 253V255M778.5 250V255M779.5 251V254M782.5 249V251M783.5 248V253M784.5 249V254M786.5 249V254M788.5 248V253M789.5 248V250M790.5 249V254M791.5 248V250M792.5 252V254M792.5 249V254M795.5 249V254M797.5 252V254M797.5 249V254M798.5 249V251M798.5 249V254M800.5 249V251M801.5 249V251M801.5 249V254M803.5 248V253M806.5 252V254M806.5 249V254M807.5 252V254M808.5 252V254M809.5 248V250M810.5 252V254M810.5 249V254M811.5 249V251M811.5 252V254M811.5 249V254M812.5 249V252M813.5 248V253M814.5 248V253M815.5 248V253M816.5 248V250M817.5 249V251M818.5 252V254M821.5 248V250M821.5 251V253M821.5 248V253M823.5 251V253M824.5 248V253M826.5 252V254M828.5 248V253M829.5 248V253M830.5 248V250M830.5 248V253M831.5 248V250M831.5 251V253M832.5 250V253M833.5 251V253M833.5 248V253M834.5 249V251M834.5 252V254M836.5 248V250M836.5 248V253M838.5 248V253M839.5 248V253M840.5 248V253M841.5 251V253M843.5 249V254M844.5 248V250M845.5 248V250M845.5 248V253M846.5 248V253M848.5 248V250M848.5 251V253M848.5 248V253M850.5 248V250M850.5 248V253M851.5 248V250M851.5 248V253M852.5 251V253M856.5 251V253M858.5 247V252M860.5 251V253M860.5 248V253M863.5 247V249M863.5 250V252M864.5 247V249M867.5 248V250M868.5 251V253M868.5 248V253M870.5 248V253M871.5 248V253M873.5 248V250M873.5 248V253M874.5 251V253M874.5 248V253M875.5 247V249M875.5 250V252M875.5 247V252M876.5 247V252M877.5 248V250M878.5 248V250M879.5 251V253M879.5 248V253M880.5 248V250M884.5 247V249M885.5 247V249M886.5 251V253M887.5 250V252M888.5 247V249M888.5 250V252M890.5 250V252M892.5 248V250M894.5 248V250M898.5 247V252M900.5 247V252M903.5 248V250M904.5 248V253M905.5 247V249M908.5 247V252M909.5 247V249M909.5 250V252M909.5 247V252M910.5 250V252M910.5 247V252M911.5 247V251M912.5 247V249M913.5 250V252M914.5 248V253M915.5 248V253M916.5 248V250M916.5 251V253M917.5 248V250M917.5 251V253M918.5 248V253M923.5 249V253M925.5 251V253M926.5 251V253M926.5 248V253M928.5 247V249M930.5 248V250M931.5 247V249M932.5 247V252M933.5 247V249M934.5 249V251M935.5 251V253M936.5 251V253M940.5 248V250M940.5 248V253M941.5 251V253M943.5 250V252M945.5 248V253M947.5 248V253M949.5 248V250M949.5 248V253M950.5 248V253M951.5 248V250M957.5 248V250M959.5 248V253M962.5 248V250M963.5 251V253M966.5 248V253M968.5 251V253M974.5 251V253M974.5 248V253M975.5 251V253M976.5 248V250M976.5 251V253M976.5 248V253M978.5 248V250M978.5 251V253M978.5 248V253M979.5 248V250M980.5 251V253M980.5 248V253M981.5 248V253M983.5 247V252M984.5 247V249M986.5 248V250M986.5 251V253M986.5 248V253M987.5 251V253M989.5 248V250M989.5 251V253M990.5 251V253M990.5 248V253M991.5 251V253M991.5 248V253M992.5 251V253M995.5 248V253M996.5 248V253M997.5 247V249M997.5 250V252M997.5 247V252M998.5 250V252M1000.5 250V252M1002.5 247V249M1005.5 248V250M1005.5 251V253M1005.5 248V253M1006.5 247V252M1007.5 251V253M1009.5 248V252M1011.5 248V253M1012.5 248V253M1014.5 248V250M1015.5 248V253M1018.5 249V254" stroke="#8C8C10"/>
  <path d="M21.5 245V247M22.5 245V247M23.5 246V248M23.5 249V251M24.5 246V248M24.5 249V251M25.5 245V247M25.5 248V250M26.5 245V247M27.5 248V250M28.5 246V248M28.5 248V250M29.5 249V251M30.5 248V250M31.5 246V250M32.5 246V248M32.5 249V251M33.5 246V248M33.5 249V251M34.5 249V251M35.5 247V249M36.5 245V247M36.5 248V250M37.5 245V247M37.5 248V250M38.5 248V250M39.5 245V247M39.5 248V250M40.5 249V251M41.5 247V249M42.5 245V247M42.5 248V250M43.5 246V248M44.5 245V247M44.5 248V250M44.5 245V250M45.5 245V247M45.5 248V250M45.5 249V251M46.5 246V248M46.5 249V251M47.5 246V248M47.5 250V252M48.5 249V251M49.5 249V251M49.5 246V251M50.5 245V247M50.5 248V250M51.5 246V250M52.5 249V251M53.5 246V248M53.5 249V251M53.5 243V247M54.5 246V248M54.5 249V251M55.5 247V249M56.5 246V248M56.5 249V251M56.5 242V247M57.5 246V248M57.5 249V251M58.5 245V247M58.5 243V246M59.5 246V248M59.5 249V251M60.5 246V248M60.5 249V251M62.5 249V251M63.5 247V251M64.5 247V249M64.5 250V252M65.5 247V249M66.5 246V248M67.5 246V248M67.5 249V251M67.5 250V253M69.5 250V252M69.5 251V254M70.5 247V250M71.5 249V251M74.5 248V250M74.5 246V248M75.5 246V248M75.5 249V251M76.5 246V248M76.5 249V251M77.5 247V249M77.5 245V247M78.5 246V248M78.5 249V251M79.5 247V251M80.5 246V248M80.5 249V251M80.5 246V251M80.5 250V254M81.5 245V247M81.5 248V250M81.5 249V254M82.5 245V247M83.5 249V251M84.5 245V247M84.5 248V250M84.5 243V246M85.5 246V248M85.5 249V251M86.5 246V248M86.5 249V251M87.5 249V251M87.5 250V253M88.5 246V248M88.5 249V251M88.5 250V254M89.5 246V248M89.5 249V251M90.5 249V251M91.5 246V248M91.5 249V251M92.5 247V249M92.5 245V248M93.5 245V247M93.5 248V250M94.5 245V251M94.5 250V252M95.5 254V256M96.5 255V257M97.5 255V258M98.5 255V258M99.5 255V257M99.5 252V255M100.5 255V259M101.5 254V256M101.5 257V259M102.5 254V256M103.5 253V257M104.5 252V254M105.5 253V255M106.5 251V253M106.5 254V256M106.5 249V252M107.5 254V256M107.5 251V256M108.5 251V253M108.5 254V256M109.5 252V255M110.5 252V255M111.5 250V252M113.5 250V252M113.5 253V255M114.5 253V255M115.5 250V252M115.5 253V255M115.5 249V251M116.5 249V251M116.5 249V254M117.5 253V255M118.5 253V255M119.5 253V255M120.5 253V255M121.5 251V254M122.5 251V253M123.5 249V253M123.5 247V249M124.5 249V251M124.5 252V254M125.5 249V253M126.5 248V250M126.5 251V253M126.5 248V253M126.5 252V257M127.5 249V252M128.5 249V251M129.5 249V251M129.5 252V254M130.5 250V252M131.5 249V251M131.5 252V254M132.5 249V251M133.5 250V252M134.5 249V253M135.5 248V250M135.5 251V253M135.5 245V249M136.5 248V250M136.5 251V253M136.5 248V253M137.5 251V253M137.5 252V257M138.5 248V250M138.5 251V253M139.5 248V250M139.5 251V253M140.5 248V250M140.5 251V253M141.5 251V253M141.5 252V257M142.5 249V252M142.5 251V253M143.5 247V249M143.5 250V252M144.5 248V250M144.5 251V253M145.5 248V250M146.5 247V252M147.5 247V249M148.5 248V250M148.5 251V253M149.5 248V250M149.5 251V253M150.5 247V249M150.5 250V252M151.5 248V250M151.5 251V253M152.5 248V252M153.5 247V251M154.5 247V249M154.5 250V252M155.5 247V249M155.5 250V252M156.5 249V251M156.5 250V253M157.5 249V251M158.5 246V248M158.5 249V251M159.5 246V248M159.5 249V251M160.5 246V248M160.5 249V251M161.5 246V248M161.5 249V251M162.5 247V250M162.5 249V253M163.5 248V251M164.5 247V249M164.5 250V252M164.5 251V255M165.5 247V249M165.5 250V252M165.5 247V252M165.5 244V248M166.5 247V249M166.5 250V252M166.5 244V248M167.5 248V250M168.5 247V249M169.5 246V248M169.5 249V251M169.5 246V251M170.5 247V250M171.5 248V251M171.5 245V248M172.5 247V249M172.5 250V252M172.5 247V252M173.5 250V252M175.5 250V252M175.5 245V248M176.5 247V252M176.5 243V248M177.5 247V249M177.5 247V252M178.5 247V249M178.5 250V252M179.5 247V249M179.5 250V252M179.5 245V248M180.5 247V249M180.5 250V252M181.5 247V249M181.5 250V252M182.5 247V249M182.5 250V252M183.5 247V249M183.5 250V252M184.5 250V252M185.5 247V249M185.5 250V252M186.5 248V250M186.5 251V253M187.5 247V249M188.5 247V249M189.5 250V252M190.5 249V252M190.5 246V249M191.5 249V252M192.5 248V253M193.5 250V254M194.5 249V251M194.5 253V256M195.5 250V252M195.5 250V255M195.5 254V258M197.5 249V251M197.5 252V254M198.5 250V254M198.5 247V250M199.5 249V251M199.5 252V254M199.5 245V250M201.5 250V252M202.5 249V251M202.5 249V254M204.5 252V254M205.5 249V251M205.5 252V254M206.5 252V254M207.5 249V254M208.5 249V251M208.5 252V254M209.5 248V250M209.5 251V253M210.5 249V251M210.5 252V254M211.5 248V250M211.5 251V253M211.5 248V253M212.5 251V253M212.5 248V253M213.5 248V250M213.5 251V253M214.5 248V250M215.5 248V250M216.5 249V252M217.5 250V252M218.5 249V253M219.5 251V255M220.5 249V251M220.5 252V254M221.5 250V254M222.5 250V252M222.5 253V255M223.5 250V252M223.5 253V255M223.5 250V255M224.5 250V252M224.5 253V255M225.5 251V255M225.5 249V251M226.5 251V253M226.5 254V256M227.5 250V252M227.5 253V255M228.5 251V253M229.5 251V253M229.5 251V256M229.5 248V252M230.5 251V253M232.5 250V252M232.5 253V255M232.5 250V255M233.5 251V254M233.5 248V251M234.5 251V253M234.5 254V256M234.5 255V259M235.5 254V256M235.5 251V256M236.5 254V256M236.5 251V256M237.5 251V253M237.5 254V256M238.5 251V253M239.5 250V252M239.5 253V255M239.5 247V251M240.5 251V253M241.5 251V255M242.5 254V256M242.5 249V253M243.5 253V258M244.5 255V257M244.5 258V261M245.5 254V256M245.5 257V259M246.5 254V256M247.5 254V256M247.5 257V259M248.5 254V256M248.5 257V259M249.5 258V260M250.5 256V259M250.5 252V256M251.5 257V259M252.5 256V260M253.5 257V260M254.5 257V261M255.5 259V264M256.5 261V263M256.5 264V266M257.5 261V263M258.5 261V263M259.5 262V267M259.5 259V262M260.5 264V266M261.5 263V270M262.5 266V269M263.5 267V270M264.5 267V272M265.5 271V273M266.5 269V272M267.5 270V272M268.5 270V274M269.5 270V275M270.5 274V276M271.5 271V273M271.5 271V276M272.5 272V274M272.5 273V275M273.5 272V276M273.5 275V279M274.5 273V276M275.5 276V278M276.5 275V281M277.5 278V286M278.5 283V291M279.5 289V295M279.5 286V289M280.5 290V293M281.5 291V295M282.5 292V294M283.5 293V295M284.5 291V297M285.5 292V297M285.5 288V292M286.5 292V294M287.5 291V293M288.5 292V294M289.5 289V294M290.5 291V294M291.5 291V296M291.5 288V291M292.5 292V298M293.5 294V298M294.5 294V299M295.5 297V300M296.5 293V301M297.5 292V296M298.5 292V294M299.5 289V295M300.5 287V293M301.5 287V289M301.5 284V286M302.5 287V290M302.5 285V287M303.5 285V287M303.5 289V291M304.5 283V287M305.5 284V287M306.5 282V284M306.5 279V282M307.5 282V285M308.5 280V282M309.5 279V282M310.5 275V277M311.5 276V278M312.5 275V277M313.5 274V279M313.5 271V274M314.5 277V279M315.5 274V276M315.5 277V279M316.5 275V278M317.5 276V280M317.5 273V276M318.5 278V280M319.5 280V282M319.5 274V278M320.5 276V278M320.5 279V281M321.5 279V281M322.5 279V281M323.5 277V279M324.5 276V280M325.5 275V279M326.5 275V277M327.5 276V278M328.5 276V278M328.5 273V278M329.5 274V277M329.5 276V278M330.5 272V278M331.5 273V275M332.5 272V274M333.5 272V274M334.5 271V275M336.5 271V273M337.5 270V275M338.5 270V272M339.5 271V273M340.5 268V270M340.5 271V273M340.5 272V277M341.5 269V271M341.5 272V274M342.5 271V273M342.5 268V273M343.5 269V271M344.5 271V273M345.5 269V272M345.5 267V269M346.5 266V273M346.5 263V266M347.5 263V269M348.5 262V264M349.5 260V266M350.5 261V263M351.5 260V262M352.5 259V263M352.5 262V264M353.5 259V262M354.5 258V260M355.5 257V259M356.5 256V260M357.5 255V257M358.5 257V260M358.5 255V257M359.5 255V259M360.5 254V256M361.5 255V258M362.5 254V257M363.5 254V256M364.5 253V256M365.5 252V254M366.5 254V256M366.5 251V256M367.5 252V255M367.5 249V252M368.5 253V255M370.5 252V255M371.5 253V255M372.5 250V252M372.5 253V255M372.5 250V255M373.5 250V252M373.5 253V255M374.5 250V252M374.5 253V255M375.5 250V254M376.5 250V254M377.5 249V254M378.5 249V251M378.5 252V254M379.5 250V253M380.5 250V252M380.5 253V255M381.5 250V254M382.5 250V252M383.5 250V253M384.5 248V250M384.5 251V253M384.5 252V256M385.5 249V252M386.5 252V254M386.5 253V257M387.5 250V253M388.5 249V253M389.5 251V253M390.5 251V253M390.5 248V253M390.5 245V249M391.5 248V250M391.5 251V253M392.5 248V250M392.5 251V253M392.5 246V249M393.5 251V253M394.5 248V252M395.5 247V249M396.5 247V249M396.5 246V248M397.5 247V249M397.5 250V252M398.5 247V249M398.5 250V252M400.5 247V249M401.5 246V248M401.5 249V251M402.5 247V249M402.5 250V252M403.5 250V252M404.5 250V252M405.5 249V251M406.5 246V248M406.5 249V251M408.5 247V249M408.5 250V252M409.5 247V249M409.5 250V252M410.5 247V249M411.5 247V249M411.5 250V252M411.5 251V254M412.5 246V248M412.5 249V251M412.5 246V251M413.5 246V248M413.5 249V251M414.5 247V249M414.5 250V252M414.5 251V254M415.5 247V249M416.5 247V249M417.5 247V249M417.5 250V252M419.5 247V249M419.5 250V252M419.5 244V248M420.5 247V249M421.5 247V249M421.5 247V252M422.5 247V249M422.5 250V252M423.5 248V250M423.5 251V253M424.5 248V252M425.5 247V249M425.5 251V255M427.5 250V252M427.5 251V253M428.5 248V251M430.5 248V251M431.5 247V249M431.5 250V252M431.5 251V255M432.5 250V252M433.5 247V250M435.5 250V252M436.5 244V248M437.5 250V252M438.5 247V249M438.5 250V252M439.5 247V249M439.5 250V252M439.5 245V248M440.5 250V252M441.5 247V251M442.5 249V251M442.5 246V251M443.5 247V250M443.5 243V247M444.5 247V251M445.5 250V252M446.5 250V252M446.5 251V253M447.5 250V252M448.5 250V252M449.5 250V252M449.5 246V248M450.5 247V249M450.5 243V248M451.5 248V252M451.5 246V248M452.5 247V251M453.5 246V248M454.5 246V248M454.5 246V251M454.5 242V247M455.5 246V248M457.5 249V251M458.5 249V251M459.5 246V248M459.5 249V251M459.5 250V254M460.5 246V248M461.5 247V250M462.5 248V251M463.5 250V252M464.5 247V251M465.5 246V248M466.5 247V249M466.5 250V252M467.5 247V249M467.5 250V252M467.5 244V248M468.5 247V249M468.5 250V252M469.5 247V249M469.5 247V252M470.5 247V249M470.5 250V252M471.5 247V249M471.5 250V252M472.5 247V249M472.5 250V252M473.5 247V249M473.5 250V252M474.5 249V251M475.5 248V251M476.5 250V252M477.5 246V248M477.5 249V251M478.5 246V248M478.5 246V251M479.5 247V249M479.5 250V252M480.5 250V252M481.5 246V248M481.5 249V251M481.5 245V247M483.5 246V248M483.5 249V251M484.5 246V248M484.5 249V251M485.5 247V250M485.5 244V247M486.5 247V249M487.5 247V249M487.5 250V252M487.5 251V255M488.5 247V249M488.5 250V252M489.5 250V252M490.5 250V252M490.5 247V252M491.5 247V249M492.5 247V249M492.5 250V252M492.5 251V254M493.5 247V249M493.5 246V248M494.5 247V249M494.5 250V252M495.5 247V249M495.5 250V252M495.5 251V254M496.5 247V249M496.5 251V256M497.5 247V249M497.5 250V252M499.5 247V249M499.5 250V252M500.5 247V249M500.5 250V252M500.5 245V248M501.5 249V251M501.5 252V256M503.5 248V250M503.5 251V253M504.5 248V250M504.5 251V253M505.5 248V250M505.5 251V253M505.5 248V253M505.5 252V255M506.5 248V250M506.5 251V253M506.5 252V256M507.5 248V250M508.5 249V251M509.5 248V250M509.5 251V253M510.5 248V250M510.5 251V253M512.5 248V252M513.5 249V251M514.5 248V250M514.5 251V253M514.5 248V253M515.5 250V252M516.5 249V254M517.5 249V251M517.5 252V254M518.5 252V254M519.5 249V251M519.5 252V254M519.5 249V254M519.5 253V257M520.5 250V252M520.5 253V255M521.5 250V252M521.5 253V255M522.5 250V252M523.5 250V255M524.5 250V252M524.5 253V255M524.5 254V258M526.5 251V255M526.5 254V257M529.5 252V254M530.5 252V256M531.5 252V254M531.5 255V257M531.5 252V257M532.5 253V255M532.5 256V258M533.5 252V254M533.5 255V257M534.5 254V256M535.5 254V257M536.5 255V258M537.5 255V260M538.5 256V262M539.5 259V264M540.5 260V265M541.5 265V267M542.5 266V268M543.5 266V274M544.5 273V275M545.5 274V280M546.5 277V281M547.5 277V282M547.5 275V277M548.5 280V286M549.5 283V286M549.5 285V287M550.5 288V290M550.5 280V283M551.5 288V292M552.5 291V293M553.5 291V296M554.5 295V297M554.5 296V298M555.5 295V302M556.5 298V301M557.5 304V306M558.5 306V308M559.5 306V311M560.5 308V314M561.5 310V316M562.5 312V315M563.5 312V318M564.5 317V319M565.5 317V320M566.5 317V325M567.5 322V327M568.5 324V329M569.5 331V333M570.5 335V337M571.5 336V343M572.5 340V348M572.5 347V351M573.5 348V350M573.5 351V354M574.5 348V356M575.5 354V360M576.5 358V360M577.5 357V365M577.5 364V367M578.5 361V367M579.5 362V364M579.5 365V367M580.5 364V366M582.5 364V368M583.5 367V369M583.5 364V369M583.5 361V365M584.5 365V368M585.5 364V368M585.5 367V371M586.5 363V366M587.5 364V369M588.5 365V369M589.5 366V373M589.5 372V375M590.5 370V376M590.5 375V379M591.5 373V374M592.5 371V373M593.5 371V374M594.5 370V372M594.5 373V375M595.5 372V374M596.5 371V374M596.5 369V371M597.5 369V371M598.5 367V369M599.5 366V369M599.5 362V366M600.5 365V367M600.5 368V370M600.5 365V370M601.5 366V369M602.5 367V369M603.5 366V373M604.5 370V375M605.5 372V382M606.5 378V386M607.5 382V390M608.5 388V395M609.5 391V396M609.5 395V398M610.5 393V396M611.5 392V394M611.5 395V397M612.5 392V394M612.5 395V397M613.5 393V397M614.5 391V393M615.5 390V394M616.5 386V392M617.5 386V388M617.5 383V386M618.5 384V390M619.5 384V387M620.5 381V386M621.5 381V383M622.5 378V384M623.5 373V380M623.5 379V381M624.5 373V377M625.5 373V375M626.5 371V376M627.5 363V372M628.5 358V365M629.5 360V362M630.5 359V361M630.5 354V357M631.5 358V360M632.5 357V360M633.5 356V359M634.5 352V358M635.5 350V356M636.5 351V353M637.5 350V353M638.5 348V352M639.5 347V351M640.5 345V349M641.5 342V348M641.5 347V349M642.5 340V344M643.5 338V340M643.5 341V343M644.5 338V342M645.5 335V337M646.5 332V339M647.5 333V335M648.5 331V335M649.5 331V334M650.5 328V330M651.5 325V327M651.5 329V333M652.5 322V327M652.5 326V330M653.5 322V324M653.5 321V323M654.5 319V321M655.5 317V322M656.5 316V321M657.5 313V315M658.5 311V316M658.5 315V318M659.5 309V313M660.5 309V312M661.5 305V311M662.5 301V307M663.5 296V298M664.5 296V299M665.5 294V296M665.5 299V301M666.5 292V297M667.5 292V294M667.5 289V292M668.5 290V294M669.5 289V293M669.5 286V289M670.5 284V292M670.5 282V284M671.5 284V286M671.5 282V284M672.5 280V282M673.5 278V283M673.5 274V278M674.5 277V279M675.5 277V279M675.5 281V283M676.5 279V281M677.5 276V278M677.5 279V281M677.5 276V281M678.5 277V279M678.5 278V281M679.5 276V281M680.5 275V279M681.5 273V278M682.5 273V277M682.5 276V280M683.5 270V276M684.5 269V274M685.5 269V272M685.5 266V269M686.5 267V269M686.5 270V272M686.5 263V268M687.5 267V269M688.5 267V272M689.5 267V272M690.5 267V271M690.5 270V274M691.5 266V268M692.5 265V268M693.5 262V267M694.5 264V266M695.5 261V263M696.5 262V264M697.5 261V266M698.5 260V264M699.5 260V262M700.5 259V263M700.5 262V265M701.5 258V261M702.5 258V262M703.5 260V262M703.5 261V263M705.5 257V259M706.5 260V262M707.5 257V259M708.5 258V260M708.5 255V258M709.5 257V260M710.5 256V258M710.5 259V261M712.5 257V260M713.5 256V260M714.5 255V257M715.5 255V257M715.5 258V260M716.5 255V260M717.5 255V257M717.5 258V260M718.5 255V257M718.5 258V260M719.5 255V258M719.5 252V255M720.5 256V259M721.5 254V256M721.5 257V259M722.5 255V258M723.5 254V256M724.5 252V254M724.5 255V257M724.5 250V253M725.5 254V256M726.5 256V258M727.5 253V257M728.5 252V257M728.5 248V253M729.5 255V257M730.5 255V257M731.5 252V254M732.5 253V255M732.5 248V252M733.5 252V254M733.5 255V257M735.5 252V254M735.5 255V257M735.5 252V257M736.5 255V257M737.5 252V254M737.5 255V257M737.5 249V253M738.5 251V253M739.5 252V254M739.5 255V257M740.5 252V254M740.5 250V253M741.5 252V254M742.5 252V254M742.5 255V257M742.5 252V257M743.5 252V254M743.5 255V257M744.5 252V254M744.5 255V257M745.5 252V254M745.5 252V257M747.5 255V257M747.5 250V253M748.5 252V254M748.5 255V257M749.5 252V254M749.5 255V257M750.5 252V254M751.5 255V257M752.5 252V254M752.5 255V257M753.5 252V254M753.5 255V257M754.5 252V254M754.5 255V257M755.5 252V254M755.5 255V257M757.5 255V257M758.5 252V256M759.5 252V255M760.5 250V252M760.5 250V255M761.5 255V257M762.5 251V253M763.5 252V254M763.5 249V252M764.5 251V255M765.5 250V252M766.5 253V255M767.5 250V252M767.5 253V255M768.5 253V255M769.5 251V255M769.5 254V258M770.5 250V252M771.5 249V251M771.5 252V254M772.5 249V251M772.5 252V254M772.5 249V254M772.5 253V257M773.5 250V252M774.5 250V255M775.5 249V251M775.5 253V255M776.5 249V251M776.5 252V254M777.5 250V253M778.5 250V252M779.5 250V252M780.5 252V254M780.5 247V250M781.5 249V251M781.5 252V254M781.5 247V250M782.5 252V254M782.5 249V254M783.5 248V250M783.5 251V253M784.5 249V251M784.5 252V254M785.5 249V251M785.5 252V254M786.5 252V254M787.5 248V250M787.5 251V253M787.5 246V249M788.5 248V250M788.5 251V253M788.5 245V249M789.5 251V253M789.5 248V253M790.5 249V251M790.5 252V254M791.5 251V253M792.5 249V251M793.5 249V251M793.5 252V254M793.5 245V250M795.5 249V251M795.5 252V254M796.5 249V253M797.5 249V251M798.5 252V254M799.5 249V251M799.5 252V254M799.5 249V254M800.5 252V254M801.5 252V254M802.5 249V253M803.5 248V250M803.5 251V253M804.5 248V252M804.5 244V248M805.5 249V251M805.5 252V254M806.5 249V251M807.5 249V251M807.5 246V250M808.5 249V251M808.5 249V254M809.5 251V253M809.5 248V253M810.5 249V251M812.5 249V251M812.5 246V249M813.5 248V250M813.5 251V253M813.5 252V256M814.5 248V250M815.5 251V253M816.5 251V253M816.5 248V253M817.5 252V254M817.5 249V254M818.5 249V251M819.5 248V252M819.5 245V248M820.5 248V250M820.5 251V253M822.5 248V250M822.5 251V253M824.5 248V250M824.5 251V253M825.5 248V250M825.5 251V253M825.5 248V253M826.5 249V251M827.5 248V250M827.5 251V253M827.5 248V253M828.5 248V250M829.5 248V250M829.5 251V253M830.5 251V253M832.5 249V251M833.5 252V257M834.5 249V254M835.5 249V254M836.5 251V253M837.5 248V250M837.5 251V253M838.5 251V253M838.5 245V249M839.5 248V250M839.5 251V253M840.5 251V253M842.5 248V250M842.5 251V253M843.5 249V251M843.5 252V254M843.5 253V258M845.5 251V253M846.5 248V250M846.5 251V253M847.5 249V251M847.5 252V254M848.5 244V249M849.5 251V253M850.5 251V253M851.5 251V253M851.5 246V249M852.5 248V250M853.5 248V250M853.5 251V253M854.5 248V250M854.5 251V253M854.5 248V253M855.5 248V250M855.5 251V253M856.5 248V250M857.5 247V249M857.5 250V252M857.5 251V253M858.5 247V249M858.5 250V252M858.5 251V254M859.5 247V249M859.5 250V252M860.5 248V250M861.5 248V250M861.5 251V253M861.5 248V253M862.5 251V253M863.5 251V254M864.5 250V252M865.5 248V250M865.5 251V253M866.5 248V252M867.5 251V253M868.5 248V250M869.5 248V252M870.5 248V250M870.5 251V253M871.5 248V250M871.5 251V253M871.5 252V257M872.5 248V250M872.5 251V253M873.5 251V253M874.5 248V250M874.5 247V249M876.5 249V251M876.5 251V253M877.5 251V253M878.5 251V253M879.5 248V250M879.5 252V255M880.5 251V253M880.5 248V253M881.5 247V249M881.5 250V252M882.5 248V250M882.5 251V253M882.5 252V256M883.5 247V249M883.5 250V252M884.5 250V252M885.5 247V252M886.5 248V250M887.5 247V249M888.5 247V252M889.5 247V249M889.5 250V252M890.5 247V249M891.5 248V250M891.5 251V253M892.5 251V253M892.5 248V253M892.5 245V249M893.5 248V250M893.5 251V253M893.5 248V253M894.5 251V253M895.5 248V250M895.5 251V253M895.5 252V256M896.5 249V252M897.5 247V251M898.5 247V249M898.5 250V252M899.5 247V249M899.5 250V252M899.5 247V252M899.5 251V255M900.5 247V249M900.5 250V252M901.5 247V249M901.5 250V252M901.5 247V252M902.5 250V252M902.5 251V254M903.5 251V253M904.5 251V253M904.5 252V255M905.5 250V252M905.5 247V252M906.5 247V249M906.5 250V252M906.5 251V255M907.5 247V249M907.5 250V252M907.5 247V252M908.5 247V249M908.5 250V252M910.5 247V249M911.5 248V250M912.5 250V252M913.5 247V249M913.5 247V252M914.5 248V250M914.5 251V253M914.5 252V254M915.5 248V250M915.5 251V253M916.5 248V253M916.5 245V249M917.5 246V249M918.5 248V250M918.5 251V253M918.5 252V255M919.5 248V250M919.5 251V253M919.5 246V249M920.5 247V249M921.5 247V249M922.5 248V251M923.5 249V251M924.5 251V253M924.5 248V253M926.5 248V250M927.5 249V252M928.5 250V252M928.5 245V248M929.5 247V249M929.5 250V252M929.5 247V252M930.5 251V253M930.5 248V253M931.5 250V252M931.5 247V252M932.5 247V249M932.5 250V252M933.5 250V252M934.5 249V251M935.5 248V250M935.5 252V257M936.5 248V250M937.5 248V250M937.5 251V253M938.5 251V253M939.5 248V250M939.5 251V253M940.5 251V253M941.5 248V250M942.5 251V253M942.5 246V249M943.5 247V249M944.5 249V253M945.5 248V250M945.5 251V253M945.5 252V255M946.5 248V250M946.5 251V253M947.5 251V253M947.5 245V249M948.5 248V250M948.5 251V253M949.5 251V253M950.5 248V250M950.5 251V253M951.5 251V253M952.5 249V253M953.5 247V249M953.5 250V252M954.5 247V249M954.5 250V252M955.5 247V249M955.5 250V252M956.5 248V250M956.5 251V253M957.5 251V253M958.5 248V250M958.5 251V253M959.5 248V250M959.5 251V253M959.5 246V249M960.5 248V250M960.5 251V253M961.5 247V249M961.5 250V252M961.5 247V252M962.5 251V253M962.5 245V249M963.5 248V250M964.5 248V250M964.5 251V253M965.5 248V250M966.5 248V250M966.5 251V253M967.5 248V250M967.5 251V253M967.5 245V249M969.5 248V252M970.5 248V250M970.5 251V253M970.5 248V253M971.5 249V251M971.5 252V254M971.5 249V254M971.5 253V258M972.5 250V252M973.5 248V250M973.5 251V253M977.5 251V253M977.5 248V253M979.5 251V253M980.5 248V250M981.5 248V250M981.5 251V253M982.5 249V252M983.5 247V249M983.5 250V252M985.5 248V252M986.5 252V256M987.5 248V250M987.5 245V249M988.5 248V250M988.5 251V253M989.5 248V253M990.5 248V250M991.5 248V250M992.5 248V250M992.5 248V253M993.5 251V253M994.5 248V253M995.5 248V250M995.5 251V253M996.5 248V250M996.5 251V253M998.5 247V249M998.5 245V248M999.5 248V250M999.5 251V253M1000.5 247V249M1000.5 245V248M1001.5 251V253M1002.5 250V252M1003.5 251V253M1004.5 248V250M1004.5 251V253M1006.5 247V249M1008.5 247V249M1008.5 250V252M1008.5 247V252M1009.5 249V251M1010.5 248V250M1010.5 251V253M1011.5 248V250M1011.5 251V253M1012.5 248V250M1012.5 251V253M1013.5 248V250M1013.5 251V253M1014.5 251V253M1014.5 252V255M1015.5 248V250M1015.5 251V253M1016.5 249V251M1016.5 249V254M1017.5 248V250M1017.5 251V253M1018.5 252V254M1019.5 249V251M1019.5 252V254M1020.5 249V251M1020.5 252V254" stroke="#ECEC00"/>
  </g>
  <!-- ch markers -->
  <path d="M0 241h13l6.5 8-6.5 8h-13z" fill="#FFFF00"/>
  <path d="M13 257l6.5-8" stroke="#000" stroke-width="1.2"/>
  <text x="4" y="255" class="st" font-size="13" fill="#000" stroke="#000" stroke-width="0.4">1</text>
  <path d="M0.5 703.5h13l5.5 8-5.5 8h-13z" fill="#000" stroke="#B000B0" stroke-width="1.2"/>
  <text x="3.5" y="716.5" class="st" font-size="14" fill="#C010C8" stroke="#C010C8" stroke-width="0.3">3</text>
  <path d="M1010 568.5l6-5.5v11z" fill="#B000B8"/>
  <rect x="1016" y="568" width="5" height="1" fill="#B000B8"/>
  <!-- readouts -->
  <g fill="#000" stroke="#dcdcdc" stroke-width="1">
  <rect x="20.5" y="773.5" width="554" height="20" rx="6"/>
  <rect x="582.5" y="773.5" width="147" height="37" rx="6"/>
  <rect x="737.5" y="773.5" width="106" height="37" rx="6"/>
  <rect x="851.5" y="773.5" width="170" height="37" rx="6"/>
  <rect x="909.5" y="832.5" width="112" height="36" rx="6"/>
  </g>
  <rect x="26" y="776" width="25" height="15.5" rx="7.75" fill="#FFFF00"/>
  <rect x="304" y="776" width="25" height="15.5" rx="7.75" fill="#A600B2"/>
  <rect x="882" y="776" width="25" height="15.5" rx="7.75" fill="#A600B2"/>
  <g class="st" font-size="14" font-weight="bold" fill="#000">
  <text x="34" y="789">1</text>
  <text x="312" y="789">3</text>
  <text x="890" y="789">3</text>
  </g>
  <g class="st" font-size="15" stroke-width="0">
  <text x="68" y="789" fill="#FFFF00" stroke="#FFFF00" stroke-width="0.45" letter-spacing="1.9">500mV Ω</text>
  <text x="347" y="789" fill="#B018B0" stroke="#B018B0" stroke-width="0.4" letter-spacing="1.2">1.00 V&#160;&#160;Ω</text>
  <text x="589" y="789" fill="#fff" stroke="#fff" letter-spacing="1.7">200ns</text>
  <text x="623" y="806" fill="#FF9A00" stroke="#FF9A00" stroke-width="0.4" letter-spacing="1.9">311.290µs</text>
  <text x="743" y="789" fill="#fff" stroke="#fff" letter-spacing="1.2">2.50GS/s</text>
  <text x="743" y="806" fill="#fff" stroke="#fff" letter-spacing="2.05">1M points</text>
  <text x="966" y="789" fill="#fff" stroke="#fff" letter-spacing="1.2">2.20 V</text>
  <text x="916" y="849" fill="#fff" stroke="#fff" letter-spacing="1.95">11 Jul&#160;&#160;2022</text>
  <text x="916" y="865" fill="#fff" stroke="#fff" letter-spacing="1.75">14:39:32</text>
  </g>
  <rect x="587.5" y="794" width="11" height="12.5" rx="2" fill="#FF9A00"/>
  <path d="M589.5 796h7v2h-2.5v7h-2v-7h-2.5z" fill="#000"/>
  <path d="M599 800.5h8" stroke="#FF9A00" stroke-width="1.6"/>
  <path d="M605 797l4.5 3.5-4.5 3.5z" fill="#FF9A00"/>
  <path d="M611 797h12l-6 8z" fill="#FF9A00"/>
  <path d="M920.5 779.5h3l4.5 8h3.5" stroke="#fff" stroke-width="1.6" fill="none"/>
</svg>
</body></html>
